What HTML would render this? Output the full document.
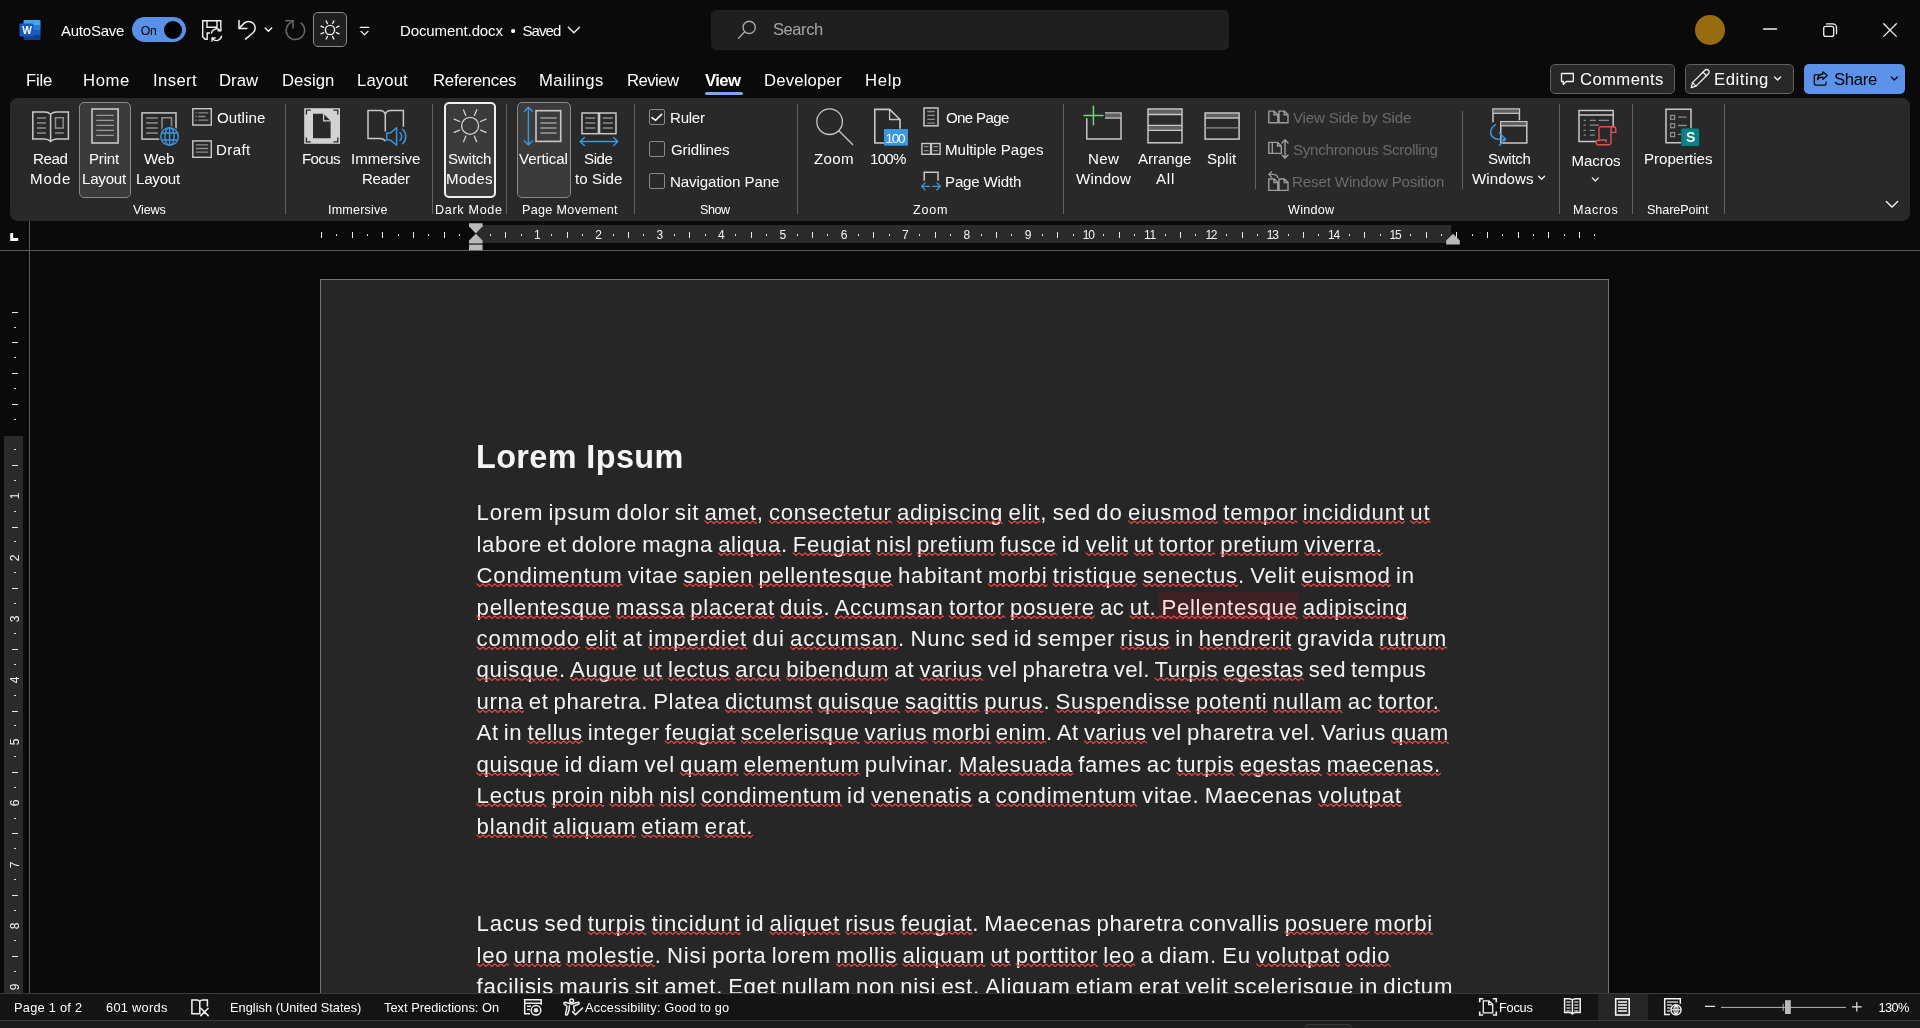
<!DOCTYPE html>
<html lang="en">
<head>
<meta charset="utf-8">
<title>Document.docx - Word</title>
<style>
html,body{margin:0;padding:0;background:#0a0a0a;}
body{width:1920px;height:1028px;overflow:hidden;background:#0a0a0a;position:relative;font-family:"Liberation Sans",sans-serif;color:#fff;}
.b{position:absolute;box-sizing:border-box;}
.t{position:absolute;white-space:pre;line-height:1;color:#fff;z-index:4;}
.d{z-index:1;}
.vn{position:absolute;left:5px;width:20px;height:14px;line-height:14px;font-size:12px;text-align:center;color:#f4f4f4;transform:rotate(-90deg);z-index:1;}
svg.sq{z-index:1;}
.hl{background:#3e2123;}
.pk{color:#f9dede;}
#app{position:absolute;left:0;top:0;width:1920px;height:1028px;overflow:hidden;will-change:transform;}
svg{position:absolute;left:0;top:0;overflow:visible;z-index:3;}
</style>
</head>
<body>
<div id="app">
<!-- title bar -->
<div class="b" style="left:711px;top:10px;width:518px;height:40px;background:#1f1f1f;border-radius:5px;"></div>
<div class="b" style="left:132px;top:17px;width:54px;height:25px;background:#5990e8;border-radius:13px;"></div>
<div class="b" style="left:164px;top:21px;width:18px;height:18px;background:#000;border-radius:9px;"></div>
<div class="b" style="left:313px;top:12px;width:34px;height:35px;background:#1f1f1f;border:1px solid #8a8a8a;border-radius:5px;"></div>
<div class="b" style="left:1695px;top:15px;width:30px;height:30px;background:#976c0f;border-radius:15px;"></div>
<!-- tab row -->
<div class="b" style="left:705px;top:92px;width:38px;height:3px;background:#7aa7f3;border-radius:2px;"></div>
<div class="b" style="left:1550px;top:64px;width:125px;height:30px;background:#282828;border:1px solid #606060;border-radius:5px;"></div>
<div class="b" style="left:1685px;top:64px;width:109px;height:30px;background:#282828;border:1px solid #606060;border-radius:5px;"></div>
<div class="b" style="left:1804px;top:64px;width:101px;height:30px;background:#5b92ea;border-radius:5px;"></div>
<!-- ribbon -->
<div class="b" style="left:10px;top:98px;width:1900px;height:123px;background:#292929;border-radius:8px;"></div>
<div class="b" style="left:79px;top:102px;width:52px;height:96px;background:#3b3b3b;border:1px solid #8a8a8a;border-radius:5px;"></div>
<div class="b" style="left:444px;top:102px;width:52px;height:96px;background:#3b3b3b;border:2px solid #f0f0f0;border-radius:5px;"></div>
<div class="b" style="left:517px;top:102px;width:54px;height:96px;background:#3b3b3b;border:1px solid #8a8a8a;border-radius:5px;"></div>
<!-- ribbon separators -->
<div class="b" style="left:285px;top:104px;width:1px;height:110px;background:#636363;"></div>
<div class="b" style="left:432px;top:104px;width:1px;height:110px;background:#636363;"></div>
<div class="b" style="left:506px;top:104px;width:1px;height:110px;background:#636363;"></div>
<div class="b" style="left:634px;top:104px;width:1px;height:110px;background:#636363;"></div>
<div class="b" style="left:797px;top:104px;width:1px;height:110px;background:#636363;"></div>
<div class="b" style="left:1063px;top:104px;width:1px;height:110px;background:#636363;"></div>
<div class="b" style="left:1255px;top:111px;width:1px;height:78px;background:#636363;"></div>
<div class="b" style="left:1462px;top:111px;width:1px;height:78px;background:#636363;"></div>
<div class="b" style="left:1559px;top:104px;width:1px;height:110px;background:#636363;"></div>
<div class="b" style="left:1632px;top:104px;width:1px;height:110px;background:#636363;"></div>
<div class="b" style="left:1724px;top:104px;width:1px;height:110px;background:#636363;"></div>
<!-- checkboxes -->
<div class="b" style="left:649px;top:109px;width:16px;height:16px;border:1px solid #8a8a8a;border-radius:2px;"></div>
<div class="b" style="left:649px;top:141px;width:16px;height:16px;border:1px solid #8a8a8a;border-radius:2px;"></div>
<div class="b" style="left:649px;top:173px;width:16px;height:16px;border:1px solid #8a8a8a;border-radius:2px;"></div>
<!-- rulers -->
<div class="b" style="left:476px;top:225px;width:975px;height:18px;background:#2b2b2b;"></div>
<div class="b" style="left:0px;top:250px;width:1920px;height:1px;background:#5a5a5a;"></div>
<div class="b" style="left:29px;top:221px;width:1px;height:772px;background:#5a5a5a;"></div>
<div class="b" style="left:4px;top:436px;width:19px;height:557px;background:#2b2b2b;"></div>
<!-- page -->
<div class="b" style="left:320px;top:279px;width:1289px;height:720px;background:#262626;border:1px solid #747474;"></div>
<div class="b hl" style="left:1159px;top:592px;width:139px;height:29px;"></div>

<div class="vn" style="top:489.4px;">1</div>
<div class="vn" style="top:550.7px;">2</div>
<div class="vn" style="top:612.1px;">3</div>
<div class="vn" style="top:673.4px;">4</div>
<div class="vn" style="top:734.8px;">5</div>
<div class="vn" style="top:796.2px;">6</div>
<div class="vn" style="top:857.5px;">7</div>
<div class="vn" style="top:918.9px;">8</div>
<div class="vn" style="top:980.2px;">9</div>
<div class="t" style="left:61.0px;top:23.00px;font-size:15px;letter-spacing:-0.24px;">AutoSave</div>
<div class="t" style="left:140.7px;top:25.00px;font-size:12.2px;letter-spacing:-0.19px;color:#000;">On</div>
<div class="t" style="left:22.3px;top:26.00px;font-size:10.2px;font-weight:700;">W</div>
<div class="t" style="left:400.0px;top:23.00px;font-size:15px;letter-spacing:-0.1px;">Document.docx</div>
<div class="t" style="left:510.6px;top:23.00px;font-size:15px;">•</div>
<div class="t" style="left:522.5px;top:23.00px;font-size:15px;letter-spacing:-0.93px;">Saved</div>
<div class="t" style="left:773.0px;top:21.00px;font-size:16.5px;letter-spacing:-0.42px;color:#a6a6a6;">Search</div>
<div class="t" style="left:26.0px;top:73.00px;font-size:16.7px;letter-spacing:-0.2px;">File</div>
<div class="t" style="left:83.0px;top:73.00px;font-size:16.7px;letter-spacing:0.59px;">Home</div>
<div class="t" style="left:153.0px;top:73.00px;font-size:16.7px;letter-spacing:0.38px;">Insert</div>
<div class="t" style="left:219.0px;top:73.00px;font-size:16.7px;letter-spacing:0.03px;">Draw</div>
<div class="t" style="left:282.0px;top:73.00px;font-size:16.7px;letter-spacing:0.07px;">Design</div>
<div class="t" style="left:357.0px;top:73.00px;font-size:16.7px;letter-spacing:0.11px;">Layout</div>
<div class="t" style="left:433.0px;top:73.00px;font-size:16.7px;letter-spacing:-0.22px;">References</div>
<div class="t" style="left:539.0px;top:73.00px;font-size:16.7px;letter-spacing:0.45px;">Mailings</div>
<div class="t" style="left:627.0px;top:73.00px;font-size:16.7px;letter-spacing:-0.53px;">Review</div>
<div class="t" style="left:764.0px;top:73.00px;font-size:16.7px;letter-spacing:0.18px;">Developer</div>
<div class="t" style="left:865.0px;top:73.00px;font-size:16.7px;letter-spacing:0.65px;">Help</div>
<div class="t" style="left:705.0px;top:73.00px;font-size:16.7px;letter-spacing:-0.58px;font-weight:700;">View</div>
<div class="t" style="left:1580.0px;top:72.00px;font-size:16.7px;letter-spacing:0.38px;">Comments</div>
<div class="t" style="left:1714.0px;top:72.00px;font-size:16.7px;letter-spacing:0.54px;">Editing</div>
<div class="t" style="left:1834.0px;top:72.00px;font-size:16.7px;letter-spacing:-0.31px;color:#000;">Share</div>
<div class="t" style="left:33.0px;top:151.00px;font-size:15.1px;letter-spacing:-0.4px;">Read</div>
<div class="t" style="left:30.0px;top:171.00px;font-size:15.1px;letter-spacing:0.88px;">Mode</div>
<div class="t" style="left:89.0px;top:151.00px;font-size:15.1px;letter-spacing:-0.21px;">Print</div>
<div class="t" style="left:82.0px;top:171.00px;font-size:15.1px;letter-spacing:-0.23px;">Layout</div>
<div class="t" style="left:144.0px;top:151.00px;font-size:15.1px;letter-spacing:-0.19px;">Web</div>
<div class="t" style="left:136.0px;top:171.00px;font-size:15.1px;letter-spacing:-0.23px;">Layout</div>
<div class="t" style="left:302.0px;top:151.00px;font-size:15.1px;letter-spacing:-0.64px;">Focus</div>
<div class="t" style="left:351.0px;top:151.00px;font-size:15.1px;letter-spacing:-0.03px;">Immersive</div>
<div class="t" style="left:362.0px;top:171.00px;font-size:15.1px;letter-spacing:-0.3px;">Reader</div>
<div class="t" style="left:448.0px;top:151.00px;font-size:15.1px;letter-spacing:-0.21px;">Switch</div>
<div class="t" style="left:446.0px;top:171.00px;font-size:15.1px;letter-spacing:0.31px;">Modes</div>
<div class="t" style="left:519.0px;top:151.00px;font-size:15.1px;letter-spacing:-0.09px;">Vertical</div>
<div class="t" style="left:584.0px;top:151.00px;font-size:15.1px;letter-spacing:-0.44px;">Side</div>
<div class="t" style="left:575.0px;top:171.00px;font-size:15.1px;letter-spacing:0.07px;">to Side</div>
<div class="t" style="left:814.0px;top:151.00px;font-size:15.1px;letter-spacing:0.33px;">Zoom</div>
<div class="t" style="left:870.0px;top:151.00px;font-size:15.1px;letter-spacing:-0.73px;">100%</div>
<div class="t" style="left:1088.0px;top:151.00px;font-size:15.1px;letter-spacing:0.35px;">New</div>
<div class="t" style="left:1076.0px;top:171.00px;font-size:15.1px;letter-spacing:0.24px;">Window</div>
<div class="t" style="left:1138.0px;top:151.00px;font-size:15.1px;letter-spacing:-0.05px;">Arrange</div>
<div class="t" style="left:1156.0px;top:171.00px;font-size:15.1px;letter-spacing:0.79px;">All</div>
<div class="t" style="left:1207.0px;top:151.00px;font-size:15.1px;letter-spacing:-0.05px;">Split</div>
<div class="t" style="left:1488.0px;top:151.00px;font-size:15.1px;letter-spacing:-0.31px;">Switch</div>
<div class="t" style="left:1472.0px;top:171.00px;font-size:15.1px;letter-spacing:0.05px;">Windows</div>
<div class="t" style="left:1571.5px;top:153.00px;font-size:15.1px;letter-spacing:-0.09px;">Macros</div>
<div class="t" style="left:1644.0px;top:151.00px;font-size:15.1px;letter-spacing:-0.03px;">Properties</div>
<div class="t" style="left:217.0px;top:110.00px;font-size:15.1px;letter-spacing:0.09px;">Outline</div>
<div class="t" style="left:216.0px;top:142.00px;font-size:15.1px;letter-spacing:0.37px;">Draft</div>
<div class="t" style="left:670.0px;top:110.00px;font-size:15.1px;letter-spacing:-0.26px;">Ruler</div>
<div class="t" style="left:671.0px;top:142.00px;font-size:15.1px;letter-spacing:-0.13px;">Gridlines</div>
<div class="t" style="left:670.0px;top:174.00px;font-size:15.1px;letter-spacing:-0.1px;">Navigation Pane</div>
<div class="t" style="left:946.0px;top:110.00px;font-size:15.1px;letter-spacing:-0.66px;">One Page</div>
<div class="t" style="left:945.0px;top:142.00px;font-size:15.1px;letter-spacing:-0.04px;">Multiple Pages</div>
<div class="t" style="left:945.0px;top:174.00px;font-size:15.1px;letter-spacing:-0.18px;">Page Width</div>
<div class="t" style="left:1293.0px;top:110.00px;font-size:15.1px;letter-spacing:-0.19px;color:#6b6b6b;">View Side by Side</div>
<div class="t" style="left:1293.0px;top:142.00px;font-size:15.1px;letter-spacing:-0.26px;color:#6b6b6b;">Synchronous Scrolling</div>
<div class="t" style="left:1292.0px;top:174.00px;font-size:15.1px;letter-spacing:-0.14px;color:#6b6b6b;">Reset Window Position</div>
<div class="t" style="left:133.0px;top:204.00px;font-size:12.6px;letter-spacing:-0.14px;">Views</div>
<div class="t" style="left:328.0px;top:204.00px;font-size:12.6px;letter-spacing:0.18px;">Immersive</div>
<div class="t" style="left:435.0px;top:204.00px;font-size:12.6px;letter-spacing:0.68px;">Dark Mode</div>
<div class="t" style="left:522.0px;top:204.00px;font-size:12.6px;letter-spacing:0.32px;">Page Movement</div>
<div class="t" style="left:700.0px;top:204.00px;font-size:12.6px;letter-spacing:-0.47px;">Show</div>
<div class="t" style="left:913.0px;top:204.00px;font-size:12.6px;letter-spacing:0.76px;">Zoom</div>
<div class="t" style="left:1288.0px;top:204.00px;font-size:12.6px;letter-spacing:0.26px;">Window</div>
<div class="t" style="left:1573.0px;top:204.00px;font-size:12.6px;letter-spacing:0.7px;">Macros</div>
<div class="t" style="left:1647.0px;top:204.00px;font-size:12.6px;letter-spacing:-0.09px;">SharePoint</div>
<div class="t" style="left:885.5px;top:132.00px;font-size:13.6px;letter-spacing:-1.31px;">100</div>
<div class="t" style="left:1686.0px;top:130.00px;font-size:14px;font-weight:700;">S</div>
<div class="t" style="left:14.0px;top:1002.00px;font-size:12.8px;letter-spacing:0.26px;">Page 1 of 2</div>
<div class="t" style="left:106.0px;top:1002.00px;font-size:12.8px;letter-spacing:0.29px;">601 words</div>
<div class="t" style="left:230.0px;top:1002.00px;font-size:12.8px;letter-spacing:0.02px;">English (United States)</div>
<div class="t" style="left:384.0px;top:1002.00px;font-size:12.8px;letter-spacing:0.03px;">Text Predictions: On</div>
<div class="t" style="left:585.0px;top:1002.00px;font-size:12.8px;letter-spacing:0.17px;">Accessibility: Good to go</div>
<div class="t" style="left:1499.0px;top:1002.00px;font-size:12.8px;letter-spacing:-0.24px;">Focus</div>
<div class="t" style="left:1878.5px;top:1002.00px;font-size:12.8px;letter-spacing:-0.62px;">130%</div>
<div class="t" style="left:533.9px;top:229.00px;font-size:12px;color:#f4f4f4;">1</div>
<div class="t" style="left:595.3px;top:229.00px;font-size:12px;color:#f4f4f4;">2</div>
<div class="t" style="left:656.6px;top:229.00px;font-size:12px;color:#f4f4f4;">3</div>
<div class="t" style="left:718.0px;top:229.00px;font-size:12px;color:#f4f4f4;">4</div>
<div class="t" style="left:779.4px;top:229.00px;font-size:12px;color:#f4f4f4;">5</div>
<div class="t" style="left:840.7px;top:229.00px;font-size:12px;color:#f4f4f4;">6</div>
<div class="t" style="left:902.1px;top:229.00px;font-size:12px;color:#f4f4f4;">7</div>
<div class="t" style="left:963.4px;top:229.00px;font-size:12px;color:#f4f4f4;">8</div>
<div class="t" style="left:1024.8px;top:229.00px;font-size:12px;color:#f4f4f4;">9</div>
<div class="t" style="left:1082.7px;top:229.00px;font-size:12px;letter-spacing:-1.19px;color:#f4f4f4;">10</div>
<div class="t" style="left:1144.0px;top:229.00px;font-size:12px;letter-spacing:-0.3px;color:#f4f4f4;">11</div>
<div class="t" style="left:1205.4px;top:229.00px;font-size:12px;letter-spacing:-1.19px;color:#f4f4f4;">12</div>
<div class="t" style="left:1266.7px;top:229.00px;font-size:12px;letter-spacing:-1.19px;color:#f4f4f4;">13</div>
<div class="t" style="left:1328.1px;top:229.00px;font-size:12px;letter-spacing:-1.19px;color:#f4f4f4;">14</div>
<div class="t" style="left:1389.5px;top:229.00px;font-size:12px;letter-spacing:-1.19px;color:#f4f4f4;">15</div>
<div class="t" style="left:476.0px;top:441.00px;font-size:32.4px;letter-spacing:0.39px;color:#f5f5f5;font-weight:700;">Lorem Ipsum</div>
<div class="t d" style="left:476.6px;top:502.00px;font-size:22.2px;letter-spacing:0.73px;color:#f3f3f3;word-spacing:-1.6px;">Lorem ipsum dolor sit <span class="u">amet</span>, <span class="u">consectetur</span> <span class="u">adipiscing</span> </div>
<div class="t d" style="left:1008.5px;top:502.00px;font-size:22.2px;letter-spacing:0.84px;color:#f3f3f3;word-spacing:-1.6px;"><span class="u">elit</span>, sed do <span class="u">eiusmod</span> <span class="u">tempor</span> <span class="u">incididunt</span> <span class="u">ut</span></div>
<div class="t d" style="left:476.6px;top:534.00px;font-size:22.2px;letter-spacing:0.59px;color:#f3f3f3;word-spacing:-1.6px;">labore et dolore magna <span class="u">aliqua</span>. <span class="u">Feugiat</span> <span class="u">nisl</span> <span class="u">pretium</span> </div>
<div class="t d" style="left:1000.0px;top:534.00px;font-size:22.2px;letter-spacing:0.69px;color:#f3f3f3;word-spacing:-1.6px;"><span class="u">fusce</span> id <span class="u">velit</span> <span class="u">ut</span> <span class="u">tortor</span> <span class="u">pretium</span> <span class="u">viverra.</span></div>
<div class="t d" style="left:476.6px;top:565.00px;font-size:22.2px;letter-spacing:0.71px;color:#f3f3f3;word-spacing:-1.6px;"><span class="u">Condimentum</span> vitae <span class="u">sapien</span> <span class="u">pellentesque</span> habitant </div>
<div class="t d" style="left:988.0px;top:565.00px;font-size:22.2px;letter-spacing:0.78px;color:#f3f3f3;word-spacing:-1.6px;"><span class="u">morbi</span> <span class="u">tristique</span> <span class="u">senectus</span>. Velit <span class="u">euismod</span> in</div>
<div class="t d" style="left:476.6px;top:597.00px;font-size:22.2px;letter-spacing:0.7px;color:#f3f3f3;word-spacing:-1.6px;"><span class="u">pellentesque</span> <span class="u">massa</span> <span class="u">placerat</span> <span class="u">duis</span>. <span class="u">Accumsan</span> <span class="u">tortor</span> </div>
<div class="t d" style="left:1010.0px;top:597.00px;font-size:22.2px;letter-spacing:0.64px;color:#f3f3f3;word-spacing:-1.6px;"><span class="u">posuere</span> ac <span class="u">ut. </span><span class="u pk">Pellentesque</span> <span class="u">adipiscing</span></div>
<div class="t d" style="left:476.6px;top:628.00px;font-size:22.2px;letter-spacing:0.85px;color:#f3f3f3;word-spacing:-1.6px;"><span class="u">commodo</span> <span class="u">elit</span> at <span class="u">imperdiet</span> dui <span class="u">accumsan</span>. Nunc </div>
<div class="t d" style="left:971.0px;top:628.00px;font-size:22.2px;letter-spacing:0.6px;color:#f3f3f3;word-spacing:-1.6px;">sed id semper <span class="u">risus</span> in <span class="u">hendrerit</span> gravida <span class="u">rutrum</span></div>
<div class="t d" style="left:476.6px;top:659.00px;font-size:22.2px;letter-spacing:0.68px;color:#f3f3f3;word-spacing:-1.6px;"><span class="u">quisque</span>. <span class="u">Augue</span> <span class="u">ut</span> <span class="u">lectus</span> <span class="u">arcu</span> <span class="u">bibendum</span> at <span class="u">varius</span> </div>
<div class="t d" style="left:987.8px;top:659.00px;font-size:22.2px;letter-spacing:0.44px;color:#f3f3f3;word-spacing:-1.6px;">vel pharetra vel. <span class="u">Turpis</span> <span class="u">egestas</span> sed tempus</div>
<div class="t d" style="left:476.6px;top:691.00px;font-size:22.2px;letter-spacing:0.62px;color:#f3f3f3;word-spacing:-1.6px;"><span class="u">urna</span> et pharetra. Platea <span class="u">dictumst</span> <span class="u">quisque</span> <span class="u">sagittis</span> </div>
<div class="t d" style="left:984.3px;top:691.00px;font-size:22.2px;letter-spacing:0.72px;color:#f3f3f3;word-spacing:-1.6px;"><span class="u">purus</span>. <span class="u">Suspendisse</span> <span class="u">potenti</span> <span class="u">nullam</span> ac <span class="u">tortor.</span></div>
<div class="t d" style="left:476.6px;top:722.00px;font-size:22.2px;letter-spacing:0.58px;color:#f3f3f3;word-spacing:-1.6px;">At in <span class="u">tellus</span> integer <span class="u">feugiat</span> <span class="u">scelerisque</span> <span class="u">varius</span> <span class="u">morbi</span> </div>
<div class="t d" style="left:995.7px;top:722.00px;font-size:22.2px;letter-spacing:0.57px;color:#f3f3f3;word-spacing:-1.6px;"><span class="u">enim</span>. At <span class="u">varius</span> vel pharetra vel. Varius <span class="u">quam</span></div>
<div class="t d" style="left:476.6px;top:754.00px;font-size:22.2px;letter-spacing:0.69px;color:#f3f3f3;word-spacing:-1.6px;"><span class="u">quisque</span> id diam vel <span class="u">quam</span> <span class="u">elementum</span> pulvinar. </div>
<div class="t d" style="left:959.1px;top:754.00px;font-size:22.2px;letter-spacing:0.6px;color:#f3f3f3;word-spacing:-1.6px;"><span class="u">Malesuada</span> fames ac <span class="u">turpis</span> <span class="u">egestas</span> <span class="u">maecenas.</span></div>
<div class="t d" style="left:476.6px;top:785.00px;font-size:22.2px;letter-spacing:0.7px;color:#f3f3f3;word-spacing:-1.6px;"><span class="u">Lectus</span> <span class="u">proin</span> <span class="u">nibh</span> <span class="u">nisl</span> <span class="u">condimentum</span> id <span class="u">venenatis</span> a </div>
<div class="t d" style="left:995.7px;top:785.00px;font-size:22.2px;letter-spacing:0.72px;color:#f3f3f3;word-spacing:-1.6px;"><span class="u">condimentum</span> vitae. Maecenas <span class="u">volutpat</span></div>
<div class="t d" style="left:476.6px;top:816.00px;font-size:22.2px;letter-spacing:0.78px;color:#f3f3f3;word-spacing:-1.6px;"><span class="u">blandit</span> <span class="u">aliquam</span> <span class="u">etiam</span> <span class="u">erat.</span></div>
<div class="t d" style="left:476.6px;top:913.00px;font-size:22.2px;letter-spacing:0.7px;color:#f3f3f3;word-spacing:-1.6px;">Lacus sed <span class="u">turpis</span> <span class="u">tincidunt</span> id <span class="u">aliquet</span> <span class="u">risus</span> <span class="u">feugiat</span>. </div>
<div class="t d" style="left:984.2px;top:913.00px;font-size:22.2px;letter-spacing:0.6px;color:#f3f3f3;word-spacing:-1.6px;">Maecenas pharetra convallis <span class="u">posuere</span> <span class="u">morbi</span></div>
<div class="t d" style="left:476.6px;top:945.00px;font-size:22.2px;letter-spacing:0.73px;color:#f3f3f3;word-spacing:-1.6px;"><span class="u">leo</span> <span class="u">urna</span> <span class="u">molestie</span>. Nisi porta lorem <span class="u">mollis</span> <span class="u">aliquam</span> </div>
<div class="t d" style="left:990.5px;top:945.00px;font-size:22.2px;letter-spacing:0.76px;color:#f3f3f3;word-spacing:-1.6px;"><span class="u">ut</span> <span class="u">porttitor</span> <span class="u">leo</span> a diam. Eu <span class="u">volutpat</span> <span class="u">odio</span></div>
<div class="t d" style="left:476.6px;top:976.00px;font-size:22.2px;letter-spacing:0.65px;color:#f3f3f3;word-spacing:-1.6px;">facilisis mauris sit amet. Eget nullam non nisi est. </div>
<div class="t d" style="left:985.2px;top:976.00px;font-size:22.2px;letter-spacing:0.73px;color:#f3f3f3;word-spacing:-1.6px;">Aliquam etiam erat velit scelerisque in dictum</div>
<svg class="sq" width="1920" height="1028" viewBox="0 0 1920 1028" fill="none" stroke="#ee4747" stroke-width="1.2" stroke-linejoin="round" stroke-linecap="round">
<path d="M704.8 520.9l3.0 2.6l3.0 -2.6l3.0 2.6l3.0 -2.6l3.0 2.6l3.0 -2.6l3.0 2.6l3.0 -2.6l3.0 2.6l3.0 -2.6l3.0 2.6l3.0 -2.6l3.0 2.6l3.0 -2.6l3.0 2.6l3.0 -2.6l3.0 2.6l0.7 -0.6 M769.3 520.9l3.0 2.6l3.0 -2.6l3.0 2.6l3.0 -2.6l3.0 2.6l3.0 -2.6l3.0 2.6l3.0 -2.6l3.0 2.6l3.0 -2.6l3.0 2.6l3.0 -2.6l3.0 2.6l3.0 -2.6l3.0 2.6l3.0 -2.6l3.0 2.6l3.0 -2.6l3.0 2.6l3.0 -2.6l3.0 2.6l3.0 -2.6l3.0 2.6l3.0 -2.6l3.0 2.6l3.0 -2.6l3.0 2.6l3.0 -2.6l3.0 2.6l3.0 -2.6l3.0 2.6l3.0 -2.6l3.0 2.6l3.0 -2.6l3.0 2.6l3.0 -2.6l3.0 2.6l3.0 -2.6l3.0 2.6l3.0 -2.6l2.2 1.9 M897.3 520.9l3.0 2.6l3.0 -2.6l3.0 2.6l3.0 -2.6l3.0 2.6l3.0 -2.6l3.0 2.6l3.0 -2.6l3.0 2.6l3.0 -2.6l3.0 2.6l3.0 -2.6l3.0 2.6l3.0 -2.6l3.0 2.6l3.0 -2.6l3.0 2.6l3.0 -2.6l3.0 2.6l3.0 -2.6l3.0 2.6l3.0 -2.6l3.0 2.6l3.0 -2.6l3.0 2.6l3.0 -2.6l3.0 2.6l3.0 -2.6l3.0 2.6l3.0 -2.6l3.0 2.6l3.0 -2.6l3.0 2.6l3.0 -2.6l3.0 2.6 M1008.8 520.9l3.0 2.6l3.0 -2.6l3.0 2.6l3.0 -2.6l3.0 2.6l3.0 -2.6l3.0 2.6l3.0 -2.6l3.0 2.6l3.0 -2.6l1.1 0.9 M1128.4 520.9l3.0 2.6l3.0 -2.6l3.0 2.6l3.0 -2.6l3.0 2.6l3.0 -2.6l3.0 2.6l3.0 -2.6l3.0 2.6l3.0 -2.6l3.0 2.6l3.0 -2.6l3.0 2.6l3.0 -2.6l3.0 2.6l3.0 -2.6l3.0 2.6l3.0 -2.6l3.0 2.6l3.0 -2.6l3.0 2.6l3.0 -2.6l3.0 2.6l3.0 -2.6l3.0 2.6l3.0 -2.6l3.0 2.6l3.0 -2.6l3.0 2.6l2.1 -1.8 M1223.6 520.9l3.0 2.6l3.0 -2.6l3.0 2.6l3.0 -2.6l3.0 2.6l3.0 -2.6l3.0 2.6l3.0 -2.6l3.0 2.6l3.0 -2.6l3.0 2.6l3.0 -2.6l3.0 2.6l3.0 -2.6l3.0 2.6l3.0 -2.6l3.0 2.6l3.0 -2.6l3.0 2.6l3.0 -2.6l3.0 2.6l3.0 -2.6l3.0 2.6l3.0 -2.6l1.5 1.3 M1303.1 520.9l3.0 2.6l3.0 -2.6l3.0 2.6l3.0 -2.6l3.0 2.6l3.0 -2.6l3.0 2.6l3.0 -2.6l3.0 2.6l3.0 -2.6l3.0 2.6l3.0 -2.6l3.0 2.6l3.0 -2.6l3.0 2.6l3.0 -2.6l3.0 2.6l3.0 -2.6l3.0 2.6l3.0 -2.6l3.0 2.6l3.0 -2.6l3.0 2.6l3.0 -2.6l3.0 2.6l3.0 -2.6l3.0 2.6l3.0 -2.6l3.0 2.6l3.0 -2.6l3.0 2.6l3.0 -2.6l3.0 2.6l2.5 -2.2 M1410.6 520.9l3.0 2.6l3.0 -2.6l3.0 2.6l3.0 -2.6l3.0 2.6l3.0 -2.6l1.5 1.3 M718.4 552.9l3.0 2.6l3.0 -2.6l3.0 2.6l3.0 -2.6l3.0 2.6l3.0 -2.6l3.0 2.6l3.0 -2.6l3.0 2.6l3.0 -2.6l3.0 2.6l3.0 -2.6l3.0 2.6l3.0 -2.6l3.0 2.6l3.0 -2.6l3.0 2.6l3.0 -2.6l3.0 2.6l3.0 -2.6l2.4 2.1 M793.1 552.9l3.0 2.6l3.0 -2.6l3.0 2.6l3.0 -2.6l3.0 2.6l3.0 -2.6l3.0 2.6l3.0 -2.6l3.0 2.6l3.0 -2.6l3.0 2.6l3.0 -2.6l3.0 2.6l3.0 -2.6l3.0 2.6l3.0 -2.6l3.0 2.6l3.0 -2.6l3.0 2.6l3.0 -2.6l3.0 2.6l3.0 -2.6l3.0 2.6l3.0 -2.6l3.0 2.6l2.8 -2.4 M876.4 552.9l3.0 2.6l3.0 -2.6l3.0 2.6l3.0 -2.6l3.0 2.6l3.0 -2.6l3.0 2.6l3.0 -2.6l3.0 2.6l3.0 -2.6l3.0 2.6l2.3 -2.0 M917.2 552.9l3.0 2.6l3.0 -2.6l3.0 2.6l3.0 -2.6l3.0 2.6l3.0 -2.6l3.0 2.6l3.0 -2.6l3.0 2.6l3.0 -2.6l3.0 2.6l3.0 -2.6l3.0 2.6l3.0 -2.6l3.0 2.6l3.0 -2.6l3.0 2.6l3.0 -2.6l3.0 2.6l3.0 -2.6l3.0 2.6l3.0 -2.6l3.0 2.6l3.0 -2.6l3.0 2.6l2.7 -2.4 M1000.3 552.9l3.0 2.6l3.0 -2.6l3.0 2.6l3.0 -2.6l3.0 2.6l3.0 -2.6l3.0 2.6l3.0 -2.6l3.0 2.6l3.0 -2.6l3.0 2.6l3.0 -2.6l3.0 2.6l3.0 -2.6l3.0 2.6l3.0 -2.6l3.0 2.6l3.0 -2.6l2.0 1.7 M1086.0 552.9l3.0 2.6l3.0 -2.6l3.0 2.6l3.0 -2.6l3.0 2.6l3.0 -2.6l3.0 2.6l3.0 -2.6l3.0 2.6l3.0 -2.6l3.0 2.6l3.0 -2.6l3.0 2.6l3.0 -2.6 M1134.1 552.9l3.0 2.6l3.0 -2.6l3.0 2.6l3.0 -2.6l3.0 2.6l3.0 -2.6l1.4 1.2 M1159.3 552.9l3.0 2.6l3.0 -2.6l3.0 2.6l3.0 -2.6l3.0 2.6l3.0 -2.6l3.0 2.6l3.0 -2.6l3.0 2.6l3.0 -2.6l3.0 2.6l3.0 -2.6l3.0 2.6l3.0 -2.6l3.0 2.6l3.0 -2.6l3.0 2.6l3.0 -2.6l1.4 1.3 M1220.5 552.9l3.0 2.6l3.0 -2.6l3.0 2.6l3.0 -2.6l3.0 2.6l3.0 -2.6l3.0 2.6l3.0 -2.6l3.0 2.6l3.0 -2.6l3.0 2.6l3.0 -2.6l3.0 2.6l3.0 -2.6l3.0 2.6l3.0 -2.6l3.0 2.6l3.0 -2.6l3.0 2.6l3.0 -2.6l3.0 2.6l3.0 -2.6l3.0 2.6l3.0 -2.6l3.0 2.6l3.0 -2.6 M1304.6 552.9l3.0 2.6l3.0 -2.6l3.0 2.6l3.0 -2.6l3.0 2.6l3.0 -2.6l3.0 2.6l3.0 -2.6l3.0 2.6l3.0 -2.6l3.0 2.6l3.0 -2.6l3.0 2.6l3.0 -2.6l3.0 2.6l3.0 -2.6l3.0 2.6l3.0 -2.6l3.0 2.6l3.0 -2.6l3.0 2.6l3.0 -2.6l3.0 2.6l3.0 -2.6l3.0 2.6l2.8 -2.4 M476.9 583.9l3.0 2.6l3.0 -2.6l3.0 2.6l3.0 -2.6l3.0 2.6l3.0 -2.6l3.0 2.6l3.0 -2.6l3.0 2.6l3.0 -2.6l3.0 2.6l3.0 -2.6l3.0 2.6l3.0 -2.6l3.0 2.6l3.0 -2.6l3.0 2.6l3.0 -2.6l3.0 2.6l3.0 -2.6l3.0 2.6l3.0 -2.6l3.0 2.6l3.0 -2.6l3.0 2.6l3.0 -2.6l3.0 2.6l3.0 -2.6l3.0 2.6l3.0 -2.6l3.0 2.6l3.0 -2.6l3.0 2.6l3.0 -2.6l3.0 2.6l3.0 -2.6l3.0 2.6l3.0 -2.6l3.0 2.6l3.0 -2.6l3.0 2.6l3.0 -2.6l3.0 2.6l3.0 -2.6l3.0 2.6l3.0 -2.6l3.0 2.6l3.0 -2.6l1.4 1.2 M683.8 583.9l3.0 2.6l3.0 -2.6l3.0 2.6l3.0 -2.6l3.0 2.6l3.0 -2.6l3.0 2.6l3.0 -2.6l3.0 2.6l3.0 -2.6l3.0 2.6l3.0 -2.6l3.0 2.6l3.0 -2.6l3.0 2.6l3.0 -2.6l3.0 2.6l3.0 -2.6l3.0 2.6l3.0 -2.6l3.0 2.6l3.0 -2.6l3.0 2.6 M758.7 583.9l3.0 2.6l3.0 -2.6l3.0 2.6l3.0 -2.6l3.0 2.6l3.0 -2.6l3.0 2.6l3.0 -2.6l3.0 2.6l3.0 -2.6l3.0 2.6l3.0 -2.6l3.0 2.6l3.0 -2.6l3.0 2.6l3.0 -2.6l3.0 2.6l3.0 -2.6l3.0 2.6l3.0 -2.6l3.0 2.6l3.0 -2.6l3.0 2.6l3.0 -2.6l3.0 2.6l3.0 -2.6l3.0 2.6l3.0 -2.6l3.0 2.6l3.0 -2.6l3.0 2.6l3.0 -2.6l3.0 2.6l3.0 -2.6l3.0 2.6l3.0 -2.6l3.0 2.6l3.0 -2.6l3.0 2.6l3.0 -2.6l3.0 2.6l3.0 -2.6l3.0 2.6l3.0 -2.6l1.8 1.6 M988.3 583.9l3.0 2.6l3.0 -2.6l3.0 2.6l3.0 -2.6l3.0 2.6l3.0 -2.6l3.0 2.6l3.0 -2.6l3.0 2.6l3.0 -2.6l3.0 2.6l3.0 -2.6l3.0 2.6l3.0 -2.6l3.0 2.6l3.0 -2.6l3.0 2.6l3.0 -2.6l3.0 2.6l1.8 -1.6 M1053.0 583.9l3.0 2.6l3.0 -2.6l3.0 2.6l3.0 -2.6l3.0 2.6l3.0 -2.6l3.0 2.6l3.0 -2.6l3.0 2.6l3.0 -2.6l3.0 2.6l3.0 -2.6l3.0 2.6l3.0 -2.6l3.0 2.6l3.0 -2.6l3.0 2.6l3.0 -2.6l3.0 2.6l3.0 -2.6l3.0 2.6l3.0 -2.6l3.0 2.6l3.0 -2.6l3.0 2.6l3.0 -2.6l3.0 2.6l3.0 -2.6 M1143.1 583.9l3.0 2.6l3.0 -2.6l3.0 2.6l3.0 -2.6l3.0 2.6l3.0 -2.6l3.0 2.6l3.0 -2.6l3.0 2.6l3.0 -2.6l3.0 2.6l3.0 -2.6l3.0 2.6l3.0 -2.6l3.0 2.6l3.0 -2.6l3.0 2.6l3.0 -2.6l3.0 2.6l3.0 -2.6l3.0 2.6l3.0 -2.6l3.0 2.6l3.0 -2.6l3.0 2.6l3.0 -2.6l3.0 2.6l3.0 -2.6l3.0 2.6l3.0 -2.6l3.0 2.6l1.5 -1.3 M1301.7 583.9l3.0 2.6l3.0 -2.6l3.0 2.6l3.0 -2.6l3.0 2.6l3.0 -2.6l3.0 2.6l3.0 -2.6l3.0 2.6l3.0 -2.6l3.0 2.6l3.0 -2.6l3.0 2.6l3.0 -2.6l3.0 2.6l3.0 -2.6l3.0 2.6l3.0 -2.6l3.0 2.6l3.0 -2.6l3.0 2.6l3.0 -2.6l3.0 2.6l3.0 -2.6l3.0 2.6l3.0 -2.6l3.0 2.6l3.0 -2.6l3.0 2.6l1.7 -1.5 M476.9 615.9l3.0 2.6l3.0 -2.6l3.0 2.6l3.0 -2.6l3.0 2.6l3.0 -2.6l3.0 2.6l3.0 -2.6l3.0 2.6l3.0 -2.6l3.0 2.6l3.0 -2.6l3.0 2.6l3.0 -2.6l3.0 2.6l3.0 -2.6l3.0 2.6l3.0 -2.6l3.0 2.6l3.0 -2.6l3.0 2.6l3.0 -2.6l3.0 2.6l3.0 -2.6l3.0 2.6l3.0 -2.6l3.0 2.6l3.0 -2.6l3.0 2.6l3.0 -2.6l3.0 2.6l3.0 -2.6l3.0 2.6l3.0 -2.6l3.0 2.6l3.0 -2.6l3.0 2.6l3.0 -2.6l3.0 2.6l3.0 -2.6l3.0 2.6l3.0 -2.6l3.0 2.6l3.0 -2.6l1.7 1.5 M616.4 615.9l3.0 2.6l3.0 -2.6l3.0 2.6l3.0 -2.6l3.0 2.6l3.0 -2.6l3.0 2.6l3.0 -2.6l3.0 2.6l3.0 -2.6l3.0 2.6l3.0 -2.6l3.0 2.6l3.0 -2.6l3.0 2.6l3.0 -2.6l3.0 2.6l3.0 -2.6l3.0 2.6l3.0 -2.6l3.0 2.6l3.0 -2.6l2.4 2.0 M690.5 615.9l3.0 2.6l3.0 -2.6l3.0 2.6l3.0 -2.6l3.0 2.6l3.0 -2.6l3.0 2.6l3.0 -2.6l3.0 2.6l3.0 -2.6l3.0 2.6l3.0 -2.6l3.0 2.6l3.0 -2.6l3.0 2.6l3.0 -2.6l3.0 2.6l3.0 -2.6l3.0 2.6l3.0 -2.6l3.0 2.6l3.0 -2.6l3.0 2.6l3.0 -2.6l3.0 2.6l3.0 -2.6l3.0 2.6l3.0 -2.6 M780.3 615.9l3.0 2.6l3.0 -2.6l3.0 2.6l3.0 -2.6l3.0 2.6l3.0 -2.6l3.0 2.6l3.0 -2.6l3.0 2.6l3.0 -2.6l3.0 2.6l3.0 -2.6l3.0 2.6l3.0 -2.6l1.0 0.9 M834.8 615.9l3.0 2.6l3.0 -2.6l3.0 2.6l3.0 -2.6l3.0 2.6l3.0 -2.6l3.0 2.6l3.0 -2.6l3.0 2.6l3.0 -2.6l3.0 2.6l3.0 -2.6l3.0 2.6l3.0 -2.6l3.0 2.6l3.0 -2.6l3.0 2.6l3.0 -2.6l3.0 2.6l3.0 -2.6l3.0 2.6l3.0 -2.6l3.0 2.6l3.0 -2.6l3.0 2.6l3.0 -2.6l3.0 2.6l3.0 -2.6l3.0 2.6l3.0 -2.6l3.0 2.6l3.0 -2.6l3.0 2.6l3.0 -2.6l3.0 2.6l3.0 -2.6l0.7 0.6 M949.2 615.9l3.0 2.6l3.0 -2.6l3.0 2.6l3.0 -2.6l3.0 2.6l3.0 -2.6l3.0 2.6l3.0 -2.6l3.0 2.6l3.0 -2.6l3.0 2.6l3.0 -2.6l3.0 2.6l3.0 -2.6l3.0 2.6l3.0 -2.6l3.0 2.6l3.0 -2.6l1.5 1.3 M1010.3 615.9l3.0 2.6l3.0 -2.6l3.0 2.6l3.0 -2.6l3.0 2.6l3.0 -2.6l3.0 2.6l3.0 -2.6l3.0 2.6l3.0 -2.6l3.0 2.6l3.0 -2.6l3.0 2.6l3.0 -2.6l3.0 2.6l3.0 -2.6l3.0 2.6l3.0 -2.6l3.0 2.6l3.0 -2.6l3.0 2.6l3.0 -2.6l3.0 2.6l3.0 -2.6l3.0 2.6l3.0 -2.6l3.0 2.6l3.0 -2.6 M1130.1 615.9l3.0 2.6l3.0 -2.6l3.0 2.6l3.0 -2.6l3.0 2.6l3.0 -2.6l3.0 2.6l3.0 -2.6l3.0 2.6l3.0 -2.6l1.4 1.2 M1161.9 615.9l3.0 2.6l3.0 -2.6l3.0 2.6l3.0 -2.6l3.0 2.6l3.0 -2.6l3.0 2.6l3.0 -2.6l3.0 2.6l3.0 -2.6l3.0 2.6l3.0 -2.6l3.0 2.6l3.0 -2.6l3.0 2.6l3.0 -2.6l3.0 2.6l3.0 -2.6l3.0 2.6l3.0 -2.6l3.0 2.6l3.0 -2.6l3.0 2.6l3.0 -2.6l3.0 2.6l3.0 -2.6l3.0 2.6l3.0 -2.6l3.0 2.6l3.0 -2.6l3.0 2.6l3.0 -2.6l3.0 2.6l3.0 -2.6l3.0 2.6l3.0 -2.6l3.0 2.6l3.0 -2.6l3.0 2.6l3.0 -2.6l3.0 2.6l3.0 -2.6l3.0 2.6l3.0 -2.6l3.0 2.6l0.5 -0.5 M1303.1 615.9l3.0 2.6l3.0 -2.6l3.0 2.6l3.0 -2.6l3.0 2.6l3.0 -2.6l3.0 2.6l3.0 -2.6l3.0 2.6l3.0 -2.6l3.0 2.6l3.0 -2.6l3.0 2.6l3.0 -2.6l3.0 2.6l3.0 -2.6l3.0 2.6l3.0 -2.6l3.0 2.6l3.0 -2.6l3.0 2.6l3.0 -2.6l3.0 2.6l3.0 -2.6l3.0 2.6l3.0 -2.6l3.0 2.6l3.0 -2.6l3.0 2.6l3.0 -2.6l3.0 2.6l3.0 -2.6l3.0 2.6l3.0 -2.6l2.6 2.3 M476.9 646.9l3.0 2.6l3.0 -2.6l3.0 2.6l3.0 -2.6l3.0 2.6l3.0 -2.6l3.0 2.6l3.0 -2.6l3.0 2.6l3.0 -2.6l3.0 2.6l3.0 -2.6l3.0 2.6l3.0 -2.6l3.0 2.6l3.0 -2.6l3.0 2.6l3.0 -2.6l3.0 2.6l3.0 -2.6l3.0 2.6l3.0 -2.6l3.0 2.6l3.0 -2.6l3.0 2.6l3.0 -2.6l3.0 2.6l3.0 -2.6l3.0 2.6l3.0 -2.6l3.0 2.6l3.0 -2.6l3.0 2.6l3.0 -2.6l0.7 0.6 M585.7 646.9l3.0 2.6l3.0 -2.6l3.0 2.6l3.0 -2.6l3.0 2.6l3.0 -2.6l3.0 2.6l3.0 -2.6l3.0 2.6l3.0 -2.6l1.1 1.0 M648.5 646.9l3.0 2.6l3.0 -2.6l3.0 2.6l3.0 -2.6l3.0 2.6l3.0 -2.6l3.0 2.6l3.0 -2.6l3.0 2.6l3.0 -2.6l3.0 2.6l3.0 -2.6l3.0 2.6l3.0 -2.6l3.0 2.6l3.0 -2.6l3.0 2.6l3.0 -2.6l3.0 2.6l3.0 -2.6l3.0 2.6l3.0 -2.6l3.0 2.6l3.0 -2.6l3.0 2.6l3.0 -2.6l3.0 2.6l3.0 -2.6l3.0 2.6l3.0 -2.6l3.0 2.6l3.0 -2.6l2.3 2.0 M790.4 646.9l3.0 2.6l3.0 -2.6l3.0 2.6l3.0 -2.6l3.0 2.6l3.0 -2.6l3.0 2.6l3.0 -2.6l3.0 2.6l3.0 -2.6l3.0 2.6l3.0 -2.6l3.0 2.6l3.0 -2.6l3.0 2.6l3.0 -2.6l3.0 2.6l3.0 -2.6l3.0 2.6l3.0 -2.6l3.0 2.6l3.0 -2.6l3.0 2.6l3.0 -2.6l3.0 2.6l3.0 -2.6l3.0 2.6l3.0 -2.6l3.0 2.6l3.0 -2.6l3.0 2.6l3.0 -2.6l3.0 2.6l3.0 -2.6l3.0 2.6l2.3 -2.0 M1120.4 646.9l3.0 2.6l3.0 -2.6l3.0 2.6l3.0 -2.6l3.0 2.6l3.0 -2.6l3.0 2.6l3.0 -2.6l3.0 2.6l3.0 -2.6l3.0 2.6l3.0 -2.6l3.0 2.6l3.0 -2.6l3.0 2.6l3.0 -2.6l1.5 1.3 M1199.1 646.9l3.0 2.6l3.0 -2.6l3.0 2.6l3.0 -2.6l3.0 2.6l3.0 -2.6l3.0 2.6l3.0 -2.6l3.0 2.6l3.0 -2.6l3.0 2.6l3.0 -2.6l3.0 2.6l3.0 -2.6l3.0 2.6l3.0 -2.6l3.0 2.6l3.0 -2.6l3.0 2.6l3.0 -2.6l3.0 2.6l3.0 -2.6l3.0 2.6l3.0 -2.6l3.0 2.6l3.0 -2.6l3.0 2.6l3.0 -2.6l3.0 2.6l3.0 -2.6l2.6 2.2 M1379.4 646.9l3.0 2.6l3.0 -2.6l3.0 2.6l3.0 -2.6l3.0 2.6l3.0 -2.6l3.0 2.6l3.0 -2.6l3.0 2.6l3.0 -2.6l3.0 2.6l3.0 -2.6l3.0 2.6l3.0 -2.6l3.0 2.6l3.0 -2.6l3.0 2.6l3.0 -2.6l3.0 2.6l3.0 -2.6l3.0 2.6l3.0 -2.6l1.3 1.1 M476.9 677.9l3.0 2.6l3.0 -2.6l3.0 2.6l3.0 -2.6l3.0 2.6l3.0 -2.6l3.0 2.6l3.0 -2.6l3.0 2.6l3.0 -2.6l3.0 2.6l3.0 -2.6l3.0 2.6l3.0 -2.6l3.0 2.6l3.0 -2.6l3.0 2.6l3.0 -2.6l3.0 2.6l3.0 -2.6l3.0 2.6l3.0 -2.6l3.0 2.6l3.0 -2.6l3.0 2.6l3.0 -2.6l3.0 2.6l1.0 -0.9 M570.3 677.9l3.0 2.6l3.0 -2.6l3.0 2.6l3.0 -2.6l3.0 2.6l3.0 -2.6l3.0 2.6l3.0 -2.6l3.0 2.6l3.0 -2.6l3.0 2.6l3.0 -2.6l3.0 2.6l3.0 -2.6l3.0 2.6l3.0 -2.6l3.0 2.6l3.0 -2.6l3.0 2.6l3.0 -2.6l3.0 2.6l3.0 -2.6l1.1 0.9 M643.1 677.9l3.0 2.6l3.0 -2.6l3.0 2.6l3.0 -2.6l3.0 2.6l3.0 -2.6l1.4 1.2 M668.2 677.9l3.0 2.6l3.0 -2.6l3.0 2.6l3.0 -2.6l3.0 2.6l3.0 -2.6l3.0 2.6l3.0 -2.6l3.0 2.6l3.0 -2.6l3.0 2.6l3.0 -2.6l3.0 2.6l3.0 -2.6l3.0 2.6l3.0 -2.6l3.0 2.6l3.0 -2.6l3.0 2.6l3.0 -2.6l1.6 1.4 M735.5 677.9l3.0 2.6l3.0 -2.6l3.0 2.6l3.0 -2.6l3.0 2.6l3.0 -2.6l3.0 2.6l3.0 -2.6l3.0 2.6l3.0 -2.6l3.0 2.6l3.0 -2.6l3.0 2.6l3.0 -2.6l3.0 2.6 M786.6 677.9l3.0 2.6l3.0 -2.6l3.0 2.6l3.0 -2.6l3.0 2.6l3.0 -2.6l3.0 2.6l3.0 -2.6l3.0 2.6l3.0 -2.6l3.0 2.6l3.0 -2.6l3.0 2.6l3.0 -2.6l3.0 2.6l3.0 -2.6l3.0 2.6l3.0 -2.6l3.0 2.6l3.0 -2.6l3.0 2.6l3.0 -2.6l3.0 2.6l3.0 -2.6l3.0 2.6l3.0 -2.6l3.0 2.6l3.0 -2.6l3.0 2.6l3.0 -2.6l3.0 2.6l3.0 -2.6l3.0 2.6l3.0 -2.6 M919.9 677.9l3.0 2.6l3.0 -2.6l3.0 2.6l3.0 -2.6l3.0 2.6l3.0 -2.6l3.0 2.6l3.0 -2.6l3.0 2.6l3.0 -2.6l3.0 2.6l3.0 -2.6l3.0 2.6l3.0 -2.6l3.0 2.6l3.0 -2.6l3.0 2.6l3.0 -2.6l3.0 2.6l3.0 -2.6l2.8 2.4 M1154.8 677.9l3.0 2.6l3.0 -2.6l3.0 2.6l3.0 -2.6l3.0 2.6l3.0 -2.6l3.0 2.6l3.0 -2.6l3.0 2.6l3.0 -2.6l3.0 2.6l3.0 -2.6l3.0 2.6l3.0 -2.6l3.0 2.6l3.0 -2.6l3.0 2.6l3.0 -2.6l3.0 2.6l3.0 -2.6l3.0 2.6 M1223.3 677.9l3.0 2.6l3.0 -2.6l3.0 2.6l3.0 -2.6l3.0 2.6l3.0 -2.6l3.0 2.6l3.0 -2.6l3.0 2.6l3.0 -2.6l3.0 2.6l3.0 -2.6l3.0 2.6l3.0 -2.6l3.0 2.6l3.0 -2.6l3.0 2.6l3.0 -2.6l3.0 2.6l3.0 -2.6l3.0 2.6l3.0 -2.6l3.0 2.6l3.0 -2.6l3.0 2.6l3.0 -2.6l2.6 2.2 M476.9 709.9l3.0 2.6l3.0 -2.6l3.0 2.6l3.0 -2.6l3.0 2.6l3.0 -2.6l3.0 2.6l3.0 -2.6l3.0 2.6l3.0 -2.6l3.0 2.6l3.0 -2.6l3.0 2.6l3.0 -2.6l3.0 2.6l1.5 -1.3 M725.3 709.9l3.0 2.6l3.0 -2.6l3.0 2.6l3.0 -2.6l3.0 2.6l3.0 -2.6l3.0 2.6l3.0 -2.6l3.0 2.6l3.0 -2.6l3.0 2.6l3.0 -2.6l3.0 2.6l3.0 -2.6l3.0 2.6l3.0 -2.6l3.0 2.6l3.0 -2.6l3.0 2.6l3.0 -2.6l3.0 2.6l3.0 -2.6l3.0 2.6l3.0 -2.6l3.0 2.6l3.0 -2.6l3.0 2.6l3.0 -2.6l3.0 2.6 M818.0 709.9l3.0 2.6l3.0 -2.6l3.0 2.6l3.0 -2.6l3.0 2.6l3.0 -2.6l3.0 2.6l3.0 -2.6l3.0 2.6l3.0 -2.6l3.0 2.6l3.0 -2.6l3.0 2.6l3.0 -2.6l3.0 2.6l3.0 -2.6l3.0 2.6l3.0 -2.6l3.0 2.6l3.0 -2.6l3.0 2.6l3.0 -2.6l3.0 2.6l3.0 -2.6l3.0 2.6l3.0 -2.6l3.0 2.6l0.6 -0.6 M905.3 709.9l3.0 2.6l3.0 -2.6l3.0 2.6l3.0 -2.6l3.0 2.6l3.0 -2.6l3.0 2.6l3.0 -2.6l3.0 2.6l3.0 -2.6l3.0 2.6l3.0 -2.6l3.0 2.6l3.0 -2.6l3.0 2.6l3.0 -2.6l3.0 2.6l3.0 -2.6l3.0 2.6l3.0 -2.6l3.0 2.6l3.0 -2.6l3.0 2.6l3.0 -2.6l1.6 1.4 M984.6 709.9l3.0 2.6l3.0 -2.6l3.0 2.6l3.0 -2.6l3.0 2.6l3.0 -2.6l3.0 2.6l3.0 -2.6l3.0 2.6l3.0 -2.6l3.0 2.6l3.0 -2.6l3.0 2.6l3.0 -2.6l3.0 2.6l3.0 -2.6l3.0 2.6l3.0 -2.6l3.0 2.6l1.6 -1.4 M1055.9 709.9l3.0 2.6l3.0 -2.6l3.0 2.6l3.0 -2.6l3.0 2.6l3.0 -2.6l3.0 2.6l3.0 -2.6l3.0 2.6l3.0 -2.6l3.0 2.6l3.0 -2.6l3.0 2.6l3.0 -2.6l3.0 2.6l3.0 -2.6l3.0 2.6l3.0 -2.6l3.0 2.6l3.0 -2.6l3.0 2.6l3.0 -2.6l3.0 2.6l3.0 -2.6l3.0 2.6l3.0 -2.6l3.0 2.6l3.0 -2.6l3.0 2.6l3.0 -2.6l3.0 2.6l3.0 -2.6l3.0 2.6l3.0 -2.6l3.0 2.6l3.0 -2.6l3.0 2.6l3.0 -2.6l3.0 2.6l3.0 -2.6l3.0 2.6l3.0 -2.6l3.0 2.6l3.0 -2.6l2.4 2.1 M1196.1 709.9l3.0 2.6l3.0 -2.6l3.0 2.6l3.0 -2.6l3.0 2.6l3.0 -2.6l3.0 2.6l3.0 -2.6l3.0 2.6l3.0 -2.6l3.0 2.6l3.0 -2.6l3.0 2.6l3.0 -2.6l3.0 2.6l3.0 -2.6l3.0 2.6l3.0 -2.6l3.0 2.6l3.0 -2.6l3.0 2.6l3.0 -2.6l3.0 2.6l2.2 -1.9 M1273.1 709.9l3.0 2.6l3.0 -2.6l3.0 2.6l3.0 -2.6l3.0 2.6l3.0 -2.6l3.0 2.6l3.0 -2.6l3.0 2.6l3.0 -2.6l3.0 2.6l3.0 -2.6l3.0 2.6l3.0 -2.6l3.0 2.6l3.0 -2.6l3.0 2.6l3.0 -2.6l3.0 2.6l3.0 -2.6l3.0 2.6l3.0 -2.6l3.0 2.6 M1378.3 709.9l3.0 2.6l3.0 -2.6l3.0 2.6l3.0 -2.6l3.0 2.6l3.0 -2.6l3.0 2.6l3.0 -2.6l3.0 2.6l3.0 -2.6l3.0 2.6l3.0 -2.6l3.0 2.6l3.0 -2.6l3.0 2.6l3.0 -2.6l3.0 2.6l3.0 -2.6l3.0 2.6l3.0 -2.6l1.2 1.1 M527.7 740.9l3.0 2.6l3.0 -2.6l3.0 2.6l3.0 -2.6l3.0 2.6l3.0 -2.6l3.0 2.6l3.0 -2.6l3.0 2.6l3.0 -2.6l3.0 2.6l3.0 -2.6l3.0 2.6l3.0 -2.6l3.0 2.6l3.0 -2.6l3.0 2.6l3.0 -2.6l0.9 0.8 M665.2 740.9l3.0 2.6l3.0 -2.6l3.0 2.6l3.0 -2.6l3.0 2.6l3.0 -2.6l3.0 2.6l3.0 -2.6l3.0 2.6l3.0 -2.6l3.0 2.6l3.0 -2.6l3.0 2.6l3.0 -2.6l3.0 2.6l3.0 -2.6l3.0 2.6l3.0 -2.6l3.0 2.6l3.0 -2.6l3.0 2.6l3.0 -2.6l3.0 2.6l1.3 -1.1 M741.1 740.9l3.0 2.6l3.0 -2.6l3.0 2.6l3.0 -2.6l3.0 2.6l3.0 -2.6l3.0 2.6l3.0 -2.6l3.0 2.6l3.0 -2.6l3.0 2.6l3.0 -2.6l3.0 2.6l3.0 -2.6l3.0 2.6l3.0 -2.6l3.0 2.6l3.0 -2.6l3.0 2.6l3.0 -2.6l3.0 2.6l3.0 -2.6l3.0 2.6l3.0 -2.6l3.0 2.6l3.0 -2.6l3.0 2.6l3.0 -2.6l3.0 2.6l3.0 -2.6l3.0 2.6l3.0 -2.6l3.0 2.6l3.0 -2.6l3.0 2.6l3.0 -2.6l3.0 2.6l3.0 -2.6l3.0 2.6l1.2 -1.1 M864.8 740.9l3.0 2.6l3.0 -2.6l3.0 2.6l3.0 -2.6l3.0 2.6l3.0 -2.6l3.0 2.6l3.0 -2.6l3.0 2.6l3.0 -2.6l3.0 2.6l3.0 -2.6l3.0 2.6l3.0 -2.6l3.0 2.6l3.0 -2.6l3.0 2.6l3.0 -2.6l3.0 2.6l3.0 -2.6l2.3 2.0 M932.7 740.9l3.0 2.6l3.0 -2.6l3.0 2.6l3.0 -2.6l3.0 2.6l3.0 -2.6l3.0 2.6l3.0 -2.6l3.0 2.6l3.0 -2.6l3.0 2.6l3.0 -2.6l3.0 2.6l3.0 -2.6l3.0 2.6l3.0 -2.6l3.0 2.6l3.0 -2.6l3.0 2.6l1.0 -0.9 M996.0 740.9l3.0 2.6l3.0 -2.6l3.0 2.6l3.0 -2.6l3.0 2.6l3.0 -2.6l3.0 2.6l3.0 -2.6l3.0 2.6l3.0 -2.6l3.0 2.6l3.0 -2.6l3.0 2.6l3.0 -2.6l3.0 2.6l3.0 -2.6l2.0 1.7 M1084.3 740.9l3.0 2.6l3.0 -2.6l3.0 2.6l3.0 -2.6l3.0 2.6l3.0 -2.6l3.0 2.6l3.0 -2.6l3.0 2.6l3.0 -2.6l3.0 2.6l3.0 -2.6l3.0 2.6l3.0 -2.6l3.0 2.6l3.0 -2.6l3.0 2.6l3.0 -2.6l3.0 2.6l3.0 -2.6l2.2 1.9 M1391.3 740.9l3.0 2.6l3.0 -2.6l3.0 2.6l3.0 -2.6l3.0 2.6l3.0 -2.6l3.0 2.6l3.0 -2.6l3.0 2.6l3.0 -2.6l3.0 2.6l3.0 -2.6l3.0 2.6l3.0 -2.6l3.0 2.6l3.0 -2.6l3.0 2.6l3.0 -2.6l3.0 2.6 M476.9 772.9l3.0 2.6l3.0 -2.6l3.0 2.6l3.0 -2.6l3.0 2.6l3.0 -2.6l3.0 2.6l3.0 -2.6l3.0 2.6l3.0 -2.6l3.0 2.6l3.0 -2.6l3.0 2.6l3.0 -2.6l3.0 2.6l3.0 -2.6l3.0 2.6l3.0 -2.6l3.0 2.6l3.0 -2.6l3.0 2.6l3.0 -2.6l3.0 2.6l3.0 -2.6l3.0 2.6l3.0 -2.6l3.0 2.6l1.1 -0.9 M680.4 772.9l3.0 2.6l3.0 -2.6l3.0 2.6l3.0 -2.6l3.0 2.6l3.0 -2.6l3.0 2.6l3.0 -2.6l3.0 2.6l3.0 -2.6l3.0 2.6l3.0 -2.6l3.0 2.6l3.0 -2.6l3.0 2.6l3.0 -2.6l3.0 2.6l3.0 -2.6l3.0 2.6l0.8 -0.7 M743.9 772.9l3.0 2.6l3.0 -2.6l3.0 2.6l3.0 -2.6l3.0 2.6l3.0 -2.6l3.0 2.6l3.0 -2.6l3.0 2.6l3.0 -2.6l3.0 2.6l3.0 -2.6l3.0 2.6l3.0 -2.6l3.0 2.6l3.0 -2.6l3.0 2.6l3.0 -2.6l3.0 2.6l3.0 -2.6l3.0 2.6l3.0 -2.6l3.0 2.6l3.0 -2.6l3.0 2.6l3.0 -2.6l3.0 2.6l3.0 -2.6l3.0 2.6l3.0 -2.6l3.0 2.6l3.0 -2.6l3.0 2.6l3.0 -2.6l3.0 2.6l3.0 -2.6l3.0 2.6l3.0 -2.6l1.5 1.3 M959.4 772.9l3.0 2.6l3.0 -2.6l3.0 2.6l3.0 -2.6l3.0 2.6l3.0 -2.6l3.0 2.6l3.0 -2.6l3.0 2.6l3.0 -2.6l3.0 2.6l3.0 -2.6l3.0 2.6l3.0 -2.6l3.0 2.6l3.0 -2.6l3.0 2.6l3.0 -2.6l3.0 2.6l3.0 -2.6l3.0 2.6l3.0 -2.6l3.0 2.6l3.0 -2.6l3.0 2.6l3.0 -2.6l3.0 2.6l3.0 -2.6l3.0 2.6l3.0 -2.6l3.0 2.6l3.0 -2.6l3.0 2.6l3.0 -2.6l3.0 2.6l3.0 -2.6l3.0 2.6l2.6 -2.2 M1176.9 772.9l3.0 2.6l3.0 -2.6l3.0 2.6l3.0 -2.6l3.0 2.6l3.0 -2.6l3.0 2.6l3.0 -2.6l3.0 2.6l3.0 -2.6l3.0 2.6l3.0 -2.6l3.0 2.6l3.0 -2.6l3.0 2.6l3.0 -2.6l3.0 2.6l3.0 -2.6l3.0 2.6 M1239.9 772.9l3.0 2.6l3.0 -2.6l3.0 2.6l3.0 -2.6l3.0 2.6l3.0 -2.6l3.0 2.6l3.0 -2.6l3.0 2.6l3.0 -2.6l3.0 2.6l3.0 -2.6l3.0 2.6l3.0 -2.6l3.0 2.6l3.0 -2.6l3.0 2.6l3.0 -2.6l3.0 2.6l3.0 -2.6l3.0 2.6l3.0 -2.6l3.0 2.6l3.0 -2.6l3.0 2.6l3.0 -2.6l3.0 2.6l0.5 -0.5 M1327.0 772.9l3.0 2.6l3.0 -2.6l3.0 2.6l3.0 -2.6l3.0 2.6l3.0 -2.6l3.0 2.6l3.0 -2.6l3.0 2.6l3.0 -2.6l3.0 2.6l3.0 -2.6l3.0 2.6l3.0 -2.6l3.0 2.6l3.0 -2.6l3.0 2.6l3.0 -2.6l3.0 2.6l3.0 -2.6l3.0 2.6l3.0 -2.6l3.0 2.6l3.0 -2.6l3.0 2.6l3.0 -2.6l3.0 2.6l3.0 -2.6l3.0 2.6l3.0 -2.6l3.0 2.6l3.0 -2.6l3.0 2.6l3.0 -2.6l3.0 2.6l3.0 -2.6l3.0 2.6l2.5 -2.2 M476.9 803.9l3.0 2.6l3.0 -2.6l3.0 2.6l3.0 -2.6l3.0 2.6l3.0 -2.6l3.0 2.6l3.0 -2.6l3.0 2.6l3.0 -2.6l3.0 2.6l3.0 -2.6l3.0 2.6l3.0 -2.6l3.0 2.6l3.0 -2.6l3.0 2.6l3.0 -2.6l3.0 2.6l3.0 -2.6l3.0 2.6l3.0 -2.6l3.0 2.6 M551.7 803.9l3.0 2.6l3.0 -2.6l3.0 2.6l3.0 -2.6l3.0 2.6l3.0 -2.6l3.0 2.6l3.0 -2.6l3.0 2.6l3.0 -2.6l3.0 2.6l3.0 -2.6l3.0 2.6l3.0 -2.6l3.0 2.6l3.0 -2.6l3.0 2.6l1.3 -1.2 M609.8 803.9l3.0 2.6l3.0 -2.6l3.0 2.6l3.0 -2.6l3.0 2.6l3.0 -2.6l3.0 2.6l3.0 -2.6l3.0 2.6l3.0 -2.6l3.0 2.6l3.0 -2.6l3.0 2.6l3.0 -2.6l2.2 2.0 M659.9 803.9l3.0 2.6l3.0 -2.6l3.0 2.6l3.0 -2.6l3.0 2.6l3.0 -2.6l3.0 2.6l3.0 -2.6l3.0 2.6l3.0 -2.6l3.0 2.6l2.6 -2.2 M701.2 803.9l3.0 2.6l3.0 -2.6l3.0 2.6l3.0 -2.6l3.0 2.6l3.0 -2.6l3.0 2.6l3.0 -2.6l3.0 2.6l3.0 -2.6l3.0 2.6l3.0 -2.6l3.0 2.6l3.0 -2.6l3.0 2.6l3.0 -2.6l3.0 2.6l3.0 -2.6l3.0 2.6l3.0 -2.6l3.0 2.6l3.0 -2.6l3.0 2.6l3.0 -2.6l3.0 2.6l3.0 -2.6l3.0 2.6l3.0 -2.6l3.0 2.6l3.0 -2.6l3.0 2.6l3.0 -2.6l3.0 2.6l3.0 -2.6l3.0 2.6l3.0 -2.6l3.0 2.6l3.0 -2.6l3.0 2.6l3.0 -2.6l3.0 2.6l3.0 -2.6l3.0 2.6l3.0 -2.6l3.0 2.6l3.0 -2.6l2.4 2.1 M871.3 803.9l3.0 2.6l3.0 -2.6l3.0 2.6l3.0 -2.6l3.0 2.6l3.0 -2.6l3.0 2.6l3.0 -2.6l3.0 2.6l3.0 -2.6l3.0 2.6l3.0 -2.6l3.0 2.6l3.0 -2.6l3.0 2.6l3.0 -2.6l3.0 2.6l3.0 -2.6l3.0 2.6l3.0 -2.6l3.0 2.6l3.0 -2.6l3.0 2.6l3.0 -2.6l3.0 2.6l3.0 -2.6l3.0 2.6l3.0 -2.6l3.0 2.6l3.0 -2.6l3.0 2.6l3.0 -2.6l3.0 2.6l1.8 -1.5 M996.0 803.9l3.0 2.6l3.0 -2.6l3.0 2.6l3.0 -2.6l3.0 2.6l3.0 -2.6l3.0 2.6l3.0 -2.6l3.0 2.6l3.0 -2.6l3.0 2.6l3.0 -2.6l3.0 2.6l3.0 -2.6l3.0 2.6l3.0 -2.6l3.0 2.6l3.0 -2.6l3.0 2.6l3.0 -2.6l3.0 2.6l3.0 -2.6l3.0 2.6l3.0 -2.6l3.0 2.6l3.0 -2.6l3.0 2.6l3.0 -2.6l3.0 2.6l3.0 -2.6l3.0 2.6l3.0 -2.6l3.0 2.6l3.0 -2.6l3.0 2.6l3.0 -2.6l3.0 2.6l3.0 -2.6l3.0 2.6l3.0 -2.6l3.0 2.6l3.0 -2.6l3.0 2.6l3.0 -2.6l3.0 2.6l3.0 -2.6l2.6 2.3 M1318.5 803.9l3.0 2.6l3.0 -2.6l3.0 2.6l3.0 -2.6l3.0 2.6l3.0 -2.6l3.0 2.6l3.0 -2.6l3.0 2.6l3.0 -2.6l3.0 2.6l3.0 -2.6l3.0 2.6l3.0 -2.6l3.0 2.6l3.0 -2.6l3.0 2.6l3.0 -2.6l3.0 2.6l3.0 -2.6l3.0 2.6l3.0 -2.6l3.0 2.6l3.0 -2.6l3.0 2.6l3.0 -2.6l3.0 2.6l2.0 -1.7 M476.9 834.9l3.0 2.6l3.0 -2.6l3.0 2.6l3.0 -2.6l3.0 2.6l3.0 -2.6l3.0 2.6l3.0 -2.6l3.0 2.6l3.0 -2.6l3.0 2.6l3.0 -2.6l3.0 2.6l3.0 -2.6l3.0 2.6l3.0 -2.6l3.0 2.6l3.0 -2.6l3.0 2.6l3.0 -2.6l3.0 2.6l3.0 -2.6l3.0 2.6l1.3 -1.1 M553.1 834.9l3.0 2.6l3.0 -2.6l3.0 2.6l3.0 -2.6l3.0 2.6l3.0 -2.6l3.0 2.6l3.0 -2.6l3.0 2.6l3.0 -2.6l3.0 2.6l3.0 -2.6l3.0 2.6l3.0 -2.6l3.0 2.6l3.0 -2.6l3.0 2.6l3.0 -2.6l3.0 2.6l3.0 -2.6l3.0 2.6l3.0 -2.6l3.0 2.6l3.0 -2.6l3.0 2.6l3.0 -2.6l3.0 2.6l1.6 -1.4 M641.6 834.9l3.0 2.6l3.0 -2.6l3.0 2.6l3.0 -2.6l3.0 2.6l3.0 -2.6l3.0 2.6l3.0 -2.6l3.0 2.6l3.0 -2.6l3.0 2.6l3.0 -2.6l3.0 2.6l3.0 -2.6l3.0 2.6l3.0 -2.6l3.0 2.6l3.0 -2.6l3.0 2.6l0.6 -0.5 M705.1 834.9l3.0 2.6l3.0 -2.6l3.0 2.6l3.0 -2.6l3.0 2.6l3.0 -2.6l3.0 2.6l3.0 -2.6l3.0 2.6l3.0 -2.6l3.0 2.6l3.0 -2.6l3.0 2.6l3.0 -2.6l3.0 2.6l2.7 -2.4 M588.0 931.9l3.0 2.6l3.0 -2.6l3.0 2.6l3.0 -2.6l3.0 2.6l3.0 -2.6l3.0 2.6l3.0 -2.6l3.0 2.6l3.0 -2.6l3.0 2.6l3.0 -2.6l3.0 2.6l3.0 -2.6l3.0 2.6l3.0 -2.6l3.0 2.6l3.0 -2.6l3.0 2.6l1.0 -0.8 M651.7 931.9l3.0 2.6l3.0 -2.6l3.0 2.6l3.0 -2.6l3.0 2.6l3.0 -2.6l3.0 2.6l3.0 -2.6l3.0 2.6l3.0 -2.6l3.0 2.6l3.0 -2.6l3.0 2.6l3.0 -2.6l3.0 2.6l3.0 -2.6l3.0 2.6l3.0 -2.6l3.0 2.6l3.0 -2.6l3.0 2.6l3.0 -2.6l3.0 2.6l3.0 -2.6l3.0 2.6l3.0 -2.6l3.0 2.6l3.0 -2.6l3.0 2.6l1.5 -1.3 M769.9 931.9l3.0 2.6l3.0 -2.6l3.0 2.6l3.0 -2.6l3.0 2.6l3.0 -2.6l3.0 2.6l3.0 -2.6l3.0 2.6l3.0 -2.6l3.0 2.6l3.0 -2.6l3.0 2.6l3.0 -2.6l3.0 2.6l3.0 -2.6l3.0 2.6l3.0 -2.6l3.0 2.6l3.0 -2.6l3.0 2.6l3.0 -2.6l3.0 2.6l0.8 -0.7 M845.5 931.9l3.0 2.6l3.0 -2.6l3.0 2.6l3.0 -2.6l3.0 2.6l3.0 -2.6l3.0 2.6l3.0 -2.6l3.0 2.6l3.0 -2.6l3.0 2.6l3.0 -2.6l3.0 2.6l3.0 -2.6l3.0 2.6l3.0 -2.6l1.9 1.6 M901.1 931.9l3.0 2.6l3.0 -2.6l3.0 2.6l3.0 -2.6l3.0 2.6l3.0 -2.6l3.0 2.6l3.0 -2.6l3.0 2.6l3.0 -2.6l3.0 2.6l3.0 -2.6l3.0 2.6l3.0 -2.6l3.0 2.6l3.0 -2.6l3.0 2.6l3.0 -2.6l3.0 2.6l3.0 -2.6l3.0 2.6l3.0 -2.6l3.0 2.6l2.0 -1.8 M1285.1 931.9l3.0 2.6l3.0 -2.6l3.0 2.6l3.0 -2.6l3.0 2.6l3.0 -2.6l3.0 2.6l3.0 -2.6l3.0 2.6l3.0 -2.6l3.0 2.6l3.0 -2.6l3.0 2.6l3.0 -2.6l3.0 2.6l3.0 -2.6l3.0 2.6l3.0 -2.6l3.0 2.6l3.0 -2.6l3.0 2.6l3.0 -2.6l3.0 2.6l3.0 -2.6l3.0 2.6l3.0 -2.6l3.0 2.6l3.0 -2.6 M1374.6 931.9l3.0 2.6l3.0 -2.6l3.0 2.6l3.0 -2.6l3.0 2.6l3.0 -2.6l3.0 2.6l3.0 -2.6l3.0 2.6l3.0 -2.6l3.0 2.6l3.0 -2.6l3.0 2.6l3.0 -2.6l3.0 2.6l3.0 -2.6l3.0 2.6l3.0 -2.6l3.0 2.6l1.1 -0.9 M476.9 963.9l3.0 2.6l3.0 -2.6l3.0 2.6l3.0 -2.6l3.0 2.6l3.0 -2.6l3.0 2.6l3.0 -2.6l3.0 2.6l3.0 -2.6l1.3 1.1 M514.0 963.9l3.0 2.6l3.0 -2.6l3.0 2.6l3.0 -2.6l3.0 2.6l3.0 -2.6l3.0 2.6l3.0 -2.6l3.0 2.6l3.0 -2.6l3.0 2.6l3.0 -2.6l3.0 2.6l3.0 -2.6l3.0 2.6l1.8 -1.6 M566.6 963.9l3.0 2.6l3.0 -2.6l3.0 2.6l3.0 -2.6l3.0 2.6l3.0 -2.6l3.0 2.6l3.0 -2.6l3.0 2.6l3.0 -2.6l3.0 2.6l3.0 -2.6l3.0 2.6l3.0 -2.6l3.0 2.6l3.0 -2.6l3.0 2.6l3.0 -2.6l3.0 2.6l3.0 -2.6l3.0 2.6l3.0 -2.6l3.0 2.6l3.0 -2.6l3.0 2.6l3.0 -2.6l3.0 2.6l3.0 -2.6l3.0 2.6l0.9 -0.8 M836.4 963.9l3.0 2.6l3.0 -2.6l3.0 2.6l3.0 -2.6l3.0 2.6l3.0 -2.6l3.0 2.6l3.0 -2.6l3.0 2.6l3.0 -2.6l3.0 2.6l3.0 -2.6l3.0 2.6l3.0 -2.6l3.0 2.6l3.0 -2.6l3.0 2.6l3.0 -2.6l3.0 2.6l3.0 -2.6l0.6 0.5 M902.8 963.9l3.0 2.6l3.0 -2.6l3.0 2.6l3.0 -2.6l3.0 2.6l3.0 -2.6l3.0 2.6l3.0 -2.6l3.0 2.6l3.0 -2.6l3.0 2.6l3.0 -2.6l3.0 2.6l3.0 -2.6l3.0 2.6l3.0 -2.6l3.0 2.6l3.0 -2.6l3.0 2.6l3.0 -2.6l3.0 2.6l3.0 -2.6l3.0 2.6l3.0 -2.6l3.0 2.6l3.0 -2.6l3.0 2.6l1.3 -1.1 M990.8 963.9l3.0 2.6l3.0 -2.6l3.0 2.6l3.0 -2.6l3.0 2.6l3.0 -2.6l1.5 1.3 M1016.2 963.9l3.0 2.6l3.0 -2.6l3.0 2.6l3.0 -2.6l3.0 2.6l3.0 -2.6l3.0 2.6l3.0 -2.6l3.0 2.6l3.0 -2.6l3.0 2.6l3.0 -2.6l3.0 2.6l3.0 -2.6l3.0 2.6l3.0 -2.6l3.0 2.6l3.0 -2.6l3.0 2.6l3.0 -2.6l3.0 2.6l3.0 -2.6l3.0 2.6l3.0 -2.6l3.0 2.6l3.0 -2.6l3.0 2.6l0.5 -0.4 M1103.5 963.9l3.0 2.6l3.0 -2.6l3.0 2.6l3.0 -2.6l3.0 2.6l3.0 -2.6l3.0 2.6l3.0 -2.6l3.0 2.6l3.0 -2.6l1.3 1.2 M1256.6 963.9l3.0 2.6l3.0 -2.6l3.0 2.6l3.0 -2.6l3.0 2.6l3.0 -2.6l3.0 2.6l3.0 -2.6l3.0 2.6l3.0 -2.6l3.0 2.6l3.0 -2.6l3.0 2.6l3.0 -2.6l3.0 2.6l3.0 -2.6l3.0 2.6l3.0 -2.6l3.0 2.6l3.0 -2.6l3.0 2.6l3.0 -2.6l3.0 2.6l3.0 -2.6l3.0 2.6l3.0 -2.6l3.0 2.6l2.2 -1.9 M1345.7 963.9l3.0 2.6l3.0 -2.6l3.0 2.6l3.0 -2.6l3.0 2.6l3.0 -2.6l3.0 2.6l3.0 -2.6l3.0 2.6l3.0 -2.6l3.0 2.6l3.0 -2.6l3.0 2.6l3.0 -2.6l2.4 2.1"/>
</svg>
<!-- status bar overlays page bottom -->
<div class="b" style="z-index:2;left:0px;top:993px;width:1920px;height:28px;background:#141414;border-top:1px solid #3a3a3a;"></div>
<div class="b" style="z-index:2;left:1598px;top:994px;width:50px;height:26px;background:#262626;"></div>
<div class="b" style="z-index:2;left:0px;top:1020px;width:1920px;height:1px;background:#3c3c3c;"></div>
<div class="b" style="z-index:2;left:0px;top:1021px;width:1920px;height:7px;background:#1c1c1c;"></div>
<svg width="1920" height="1028" viewBox="0 0 1920 1028" fill="none" stroke-linecap="round" stroke-linejoin="round">
<!-- TITLEBAR ICONS -->
<g id="word-logo" stroke="none">
<path d="M24.5 20h15a1 1 0 0 1 1 1v4.2h-17v-4.2a1 1 0 0 1 1-1z" fill="#41a5ee"/>
<rect x="23.5" y="25" width="17" height="5" fill="#2b7cd3"/>
<rect x="23.5" y="30" width="17" height="5" fill="#185abd"/>
<path d="M23.5 35h17v4a1 1 0 0 1-1 1h-15a1 1 0 0 1-1-1z" fill="#103f91"/>
<rect x="19.5" y="23.5" width="14" height="13" rx="1.2" fill="#185abd"/>
</g>
<g id="save" stroke="#f2f2f2" stroke-width="1.4" stroke-linejoin="miter" stroke-linecap="butt">
<path d="M220.800 27.500v-6.800h-18.100v16l2.400 2.500h2.700"/>
<path d="M207 20.700v6.600h10v-6.600"/>
<path d="M207.200 39.200v-6.200h2.800"/>
<path d="M211.400 33.200a5.300 5.300 0 0 1 9.200-2.600M221 27.600v3.200h-3.200M221.600 36.200a5.300 5.300 0 0 1-9.200 2.600M212 41.200v-3.200h3.200" stroke-width="1.300" stroke-linecap="round" stroke-linejoin="round"/>
</g>
<g id="undo" stroke="#f2f2f2" stroke-width="1.5">
<path d="M239 20.6v7.8h7.8"/>
<path d="M239.3 28.1l4.7-4.7a6.5 6.5 0 0 1 9.3 9.1l-7.8 6.6"/>
<path d="M265.2 28l3.2 3.3 3.2-3.3"/>
</g>
<g id="redo" stroke="#6a6a6a" stroke-width="1.5">
<path d="M285.8 20.8h7.2v7.2"/>
<path d="M292.6 21.6a9.2 9.2 0 1 0 8.4 1.5"/>
</g>
<g id="sun" stroke="#f2f2f2" stroke-width="1.4">
<circle cx="330" cy="30" r="4.600"/>
<path d="M336.4 27.4L339.1 26.2M332.6 23.6L333.8 20.9M327.4 23.6L326.2 20.9M323.6 27.4L320.9 26.2M323.6 32.6L320.9 33.8M327.4 36.4L326.2 39.1M332.6 36.4L333.8 39.1M336.4 32.6L339.1 33.8" stroke-width="1.300"/>
</g>
<g id="qat" stroke="#f2f2f2" stroke-width="1.3">
<path d="M360.3 27.4h8.4M361 31.4l3.5 3.4 3.5-3.4"/>
</g>
<path d="M568.3 27.3l5.6 5.5 5.6-5.5" stroke="#f2f2f2" stroke-width="1.4"/>
<g id="search" stroke="#a6a6a6" stroke-width="1.4">
<circle cx="749.2" cy="27.4" r="6.1"/><path d="M744.8 31.8l-6.3 6.5"/>
</g>
<g id="winctl" stroke="#f2f2f2" stroke-width="1.3">
<path d="M1763.5 29h13"/>
<rect x="1823.7" y="26.4" width="10" height="10" rx="2"/>
<path d="M1826.5 23.8h6.2a3.8 3.8 0 0 1 3.8 3.8v6.2"/>
<path d="M1883.7 23.8l12.6 12.6M1896.3 23.8l-12.6 12.6"/>
</g>
<!-- TAB ROW BUTTON ICONS -->
<g id="comment-ic" stroke="#f2f2f2" stroke-width="1.3">
<path d="M1561.5 73.5h11.8v8h-7l-3 3v-3h-1.8z"/>
</g>
<g id="pencil" stroke="#f2f2f2" stroke-width="1.3">
<path d="M1691.2 87.6l1.3-5 12.4-12.4a2.4 2.4 0 0 1 3.5 3.5l-12.4 12.4z"/>
<path d="M1703 72.2l3.5 3.5M1692.5 82.6l3.5 3.5"/>
</g>
<path d="M1774.600 77l3 3 3-3" stroke="#f2f2f2" stroke-width="1.400"/>
<g id="share-ic" stroke="#0a0a0a" stroke-width="1.3">
<path d="M1818.5 74.6h-2.6a1.6 1.6 0 0 0-1.6 1.6v7.4a1.6 1.6 0 0 0 1.6 1.6h8.6a1.6 1.6 0 0 0 1.6-1.6v-1.4"/>
<path d="M1822.8 71.8l4.4 3.8-4.4 3.8v-2.3c-2.6 0-4.3.8-5.3 2.6.2-3.2 2-5.4 5.3-5.7z"/>
</g>
<path d="M1891.300 77l3 3 3-3" stroke="#0a0a0a" stroke-width="1.400"/>
<!-- RIBBON ICONS -->
<g id="ic-read" stroke="#c8c8c8" stroke-width="1.5" stroke-linejoin="miter" stroke-linecap="butt">
<path d="M50.6 114.2c-1.6-1.5-3.6-2.2-6-2.2h-11.8v27h11.8c2.4 0 4.4 .9 6 2.6c1.6-1.7 3.600-2.600 6-2.600h11.800v-27h-11.800c-2.400 0-4.400 .7-6 2.200zM50.600 114.200v27"/>
<path d="M37 118h9M37 123h9M37 128h9M37 133h9M54.800 133h9" stroke="#8c8c8c" stroke-width="1.400"/>
<rect x="55.500" y="117.700" width="7.700" height="10.400" stroke="#8c8c8c"/>
</g>
<g id="ic-print" stroke="#c8c8c8" stroke-width="1.600" stroke-linejoin="miter" stroke-linecap="butt">
<rect x="92" y="109" width="26.100" height="34"/>
<path d="M96.200 115.300h17.700M96.200 120.300h17.700M96.200 125.300h17.700M96.200 130.300h17.700M96.200 135.300h17.700" stroke="#9a9a9a" stroke-width="1.300"/>
</g>
<g id="ic-web" stroke-linejoin="miter" stroke-linecap="butt">
<rect x="142" y="112.900" width="34" height="26.200" stroke="#c8c8c8" stroke-width="1.500"/>
<path d="M146.200 118h11.600M146.200 123h11.600M146.200 128h11.600M146.200 133h11.600" stroke="#8c8c8c" stroke-width="1.400"/>
<path d="M162 131v-13.300h9.500v13.300" stroke="#8c8c8c" stroke-width="1.500"/>
<circle cx="169.600" cy="136.500" r="10.600" fill="#292929" stroke="none"/>
<g stroke="#3a96dd" stroke-width="1.400">
<circle cx="169.600" cy="136.500" r="8.800"/>
<ellipse cx="169.600" cy="136.500" rx="4.600" ry="8.800"/>
<path d="M169.600 127.700v17.600M161.600 133h16M161.600 140h16"/>
</g>
</g>
<g id="ic-outline" stroke-linejoin="miter" stroke-linecap="butt">
<rect x="192.800" y="108.700" width="18.500" height="16.400" stroke="#c8c8c8" stroke-width="1.400"/>
<path d="M198.300 112.800h10M198.300 116.500h7.200M198.300 120.200h10M195.500 112.800h1.300M195.500 116.500h1.300M195.500 120.200h1.300" stroke="#8c8c8c" stroke-width="1.300"/>
<rect x="192.800" y="140.900" width="18.500" height="16.400" stroke="#c8c8c8" stroke-width="1.400"/>
<path d="M195.800 144.800h12.500M195.800 148.500h12.500M195.800 152.200h12.500" stroke="#8c8c8c" stroke-width="1.300"/>
</g>
<g id="ic-focus" stroke-linejoin="miter" stroke-linecap="butt">
<rect x="304.200" y="108.200" width="35.800" height="35.600" fill="#d2d2d2" stroke="none"/>
<path d="M313 113.800h10.500l7.100 7v17.500h-17.600z" fill="#292929" stroke="none"/>
<path d="M323.600 113.800v7h7" stroke="#d2d2d2" stroke-width="1.200"/>
<path d="M306.400 114.600v-4.400h4.400M333.400 110.200h4.400v4.400M306.400 137.400v4.400h4.400M333.400 141.800h4.400v-4.400" stroke="#292929" stroke-width="1.300"/>
</g>
<g id="ic-immersive" stroke-linejoin="round" stroke-linecap="butt">
<path d="M385.300 131.500v-17c-.6-2.600-2.600-4-5.500-4h-11.800v28h11.800c2.600 0 4.500 .9 5.500 2.600M385.300 114.500c.6-2.600 2.600-4 5.500-4h12.600v16.200" stroke="#c8c8c8" stroke-width="1.500" stroke-linejoin="miter"/>
<g stroke="#3a96dd" stroke-width="1.500">
<path d="M396.600 127.700v17.600l-6.400-5.400h-3.500v-6.800h3.500z"/>
<path d="M400 132.500a5.600 5.600 0 0 1 0 8M402.600 129.200a10 10 0 0 1 0 14.600" stroke-linecap="round"/>
</g>
</g>
<g id="ic-sun" stroke="#d2d2d2" stroke-width="1.300" stroke-linecap="round">
<circle cx="470.100" cy="125.800" r="8.500"/>
<path d="M474.400 115.400l2.300-5.500M480.500 121.500l5.500-2.300M480.500 130.100l5.500 2.300M474.400 136.200l2.300 5.500M465.800 136.200l-2.300 5.500M459.700 130.100l-5.500 2.300M459.700 121.500l-5.500-2.300M465.800 115.400l-2.300-5.500"/>
</g>
<g id="ic-vertical" stroke-linejoin="miter" stroke-linecap="butt">
<path d="M528.400 107.400v37.400M524.300 111.400l4.100-4.200 4.100 4.200M524.300 140.800l4.100 4.200 4.100-4.200" stroke="#3a96dd" stroke-width="1.400" stroke-linecap="round" stroke-linejoin="round"/>
<rect x="536" y="110.700" width="24.700" height="30.700" stroke="#c8c8c8" stroke-width="1.600"/>
<path d="M540.300 118h16.400M540.300 123h16.400M540.300 128h16.400M540.300 133h16.400" stroke="#9a9a9a" stroke-width="1.400"/>
</g>
<g id="ic-side" stroke-linejoin="miter" stroke-linecap="butt">
<rect x="582" y="113" width="34" height="20.700" stroke="#c8c8c8" stroke-width="1.500"/>
<path d="M599 113v20.700" stroke="#c8c8c8" stroke-width="2.600"/>
<path d="M585.300 118h10M585.300 123h10M585.300 128h10M602.800 118h10M602.800 123h10M602.800 128h10" stroke="#8c8c8c" stroke-width="1.400"/>
<path d="M580.400 141.500h37.200M584.400 137.400l-4.200 4.100 4.200 4.100M613.600 137.400l4.200 4.100-4.200 4.100" stroke="#3a96dd" stroke-width="1.400" stroke-linecap="round" stroke-linejoin="round"/>
</g>
<path d="M652 117.600l3.600 2.700 6-5.900" stroke="#fff" stroke-width="1.600"/>
<g id="ic-zoom" stroke="#c8c8c8" stroke-width="1.300">
<circle cx="829.600" cy="121.700" r="12.800"/><path d="M838.800 130.800l13.800 13.700"/>
</g>
<g id="ic-100" stroke-linejoin="miter" stroke-linecap="butt">
<path d="M884 143h-9.200v-33.600h14.800l10.400 10.100v9.300" stroke="#c8c8c8" stroke-width="1.600"/>
<path d="M889.600 109.400v10.100h10.400" stroke="#c8c8c8" stroke-width="1.300"/>
<rect x="884" y="129" width="24" height="16.700" fill="#3a96dd" stroke="none"/>
</g>
<g id="ic-zoomsmall" stroke-linejoin="miter" stroke-linecap="butt">
<rect x="924" y="108" width="14" height="17.800" stroke="#c8c8c8" stroke-width="1.500"/>
<path d="M927.200 111.500h7.600M927.200 115.400h7.600M927.200 119.300h7.600M927.200 123.200h7.600" stroke="#8c8c8c" stroke-width="1.300" stroke-dasharray="none"/>
<rect x="921.900" y="143.500" width="18.200" height="10.800" stroke="#c8c8c8" stroke-width="1.400"/>
<path d="M931 143.500v10.800" stroke="#c8c8c8" stroke-width="2.200"/>
<path d="M924 146.600h4.600M924 150.600h4.600M933.400 146.600h4.600M933.400 150.600h4.600" stroke="#8c8c8c" stroke-width="1.300"/>
<path d="M924.200 180.700v-8.500h13.800v8.500" stroke="#c8c8c8" stroke-width="1.500"/>
<path d="M921.800 186.400h7.600M932.600 186.400h7.600M925 183l-3.400 3.400 3.400 3.400M937 183l3.400 3.400-3.400 3.400" stroke="#3a96dd" stroke-width="1.300" stroke-linecap="round" stroke-linejoin="round"/>
</g>
<g id="ic-newwin" stroke-linejoin="miter" stroke-linecap="butt">
<path d="M1105 113h16v26h-34.200v-20.800" stroke="#c8c8c8" stroke-width="1.500"/>
<rect x="1105" y="113.700" width="15.300" height="3.600" fill="#606060" stroke="none"/>
<path d="M1105 118h16" stroke="#c8c8c8" stroke-width="1.400"/>
<path d="M1093.400 106.200v18.600M1084 115.400h19" stroke="#6bd67c" stroke-width="1.500" stroke-linecap="round"/>
</g>
<g id="ic-arrange" stroke-linejoin="miter" stroke-linecap="butt">
<rect x="1148.800" y="109.600" width="32.400" height="4.600" fill="#606060" stroke="none"/>
<rect x="1148.800" y="126" width="32.400" height="4" fill="#606060" stroke="none"/>
<rect x="1148" y="109" width="34" height="33.800" stroke="#c8c8c8" stroke-width="1.500"/>
<path d="M1148 114.500h34M1148 125.300h34M1148 130.300h34" stroke="#c8c8c8" stroke-width="1.300"/>
</g>
<g id="ic-split" stroke-linejoin="miter" stroke-linecap="butt">
<rect x="1205.800" y="113.600" width="32.400" height="4" fill="#606060" stroke="none"/>
<rect x="1205.100" y="113" width="34" height="26.100" stroke="#c8c8c8" stroke-width="1.500"/>
<path d="M1205.100 118h34" stroke="#c8c8c8" stroke-width="1.300"/>
<path d="M1205.100 127.900h34" stroke="#8c8c8c" stroke-width="1.300"/>
</g>
<g id="ic-dis" stroke="#9c9c9c" stroke-width="1.400" stroke-linejoin="miter" stroke-linecap="butt">
<path d="M1268.800 111.100h5.400l3.600 3.400v8.200h-9zM1274 111.100v3.600h3.800M1279 111.100h5.400l3.600 3.400v8.200h-9zM1284.200 111.100v3.600h3.800"/>
<path d="M1271.800 142.400h-3v11h3M1272.300 142.400h5.400l3.600 3.400v7.600h-9zM1277.500 142.400v3.600h3.800"/>
<path d="M1285 140v18M1282 143l3-3.200 3 3.200M1282 155l3 3.200 3-3.200" stroke-linecap="round" stroke-linejoin="round"/>
<path d="M1268.800 179h5.400l3.600 3.400v8h-9zM1274 179v3.600h3.800M1279 179h5.400l3.600 3.400v8h-9zM1284.200 179v3.600h3.800"/>
<path d="M1269 174.400h4c2.600 0 4.300 1.200 4.800 3.200M1271.600 171.600l-2.800 2.800 2.800 2.800" stroke-linecap="round" stroke-linejoin="round" stroke-width="1.300"/>
</g>
<g id="ic-switchwin" stroke-linejoin="miter" stroke-linecap="butt">
<path d="M1493 122.300v-13.300h26.400v11.300" stroke="#c8c8c8" stroke-width="1.500"/>
<rect x="1493.700" y="109.700" width="25" height="3" fill="#606060" stroke="none"/>
<path d="M1493 113.300h26.400" stroke="#c8c8c8" stroke-width="1.300"/>
<rect x="1500.800" y="121.700" width="26" height="21.300" stroke="#c8c8c8" stroke-width="1.500"/>
<rect x="1501.500" y="122.400" width="24.600" height="2.800" fill="#606060" stroke="none"/>
<path d="M1500.800 125.800h26" stroke="#c8c8c8" stroke-width="1.300"/>
<path d="M1495.400 124.600c-4.600 3-6 8-3.400 11.600c2.200 3 6.500 3.600 13 3.200M1499.400 133l6.400 6.300-6.400 6" stroke="#3a96dd" stroke-width="1.500" stroke-linecap="round" stroke-linejoin="round"/>
</g>
<path d="M1538.600 176.200l3 3.100 3-3.100M1592.300 177.900l3 3.100 3-3.100" stroke="#f2f2f2" stroke-width="1.300"/>
<g id="ic-macros" stroke-linejoin="miter" stroke-linecap="butt">
<path d="M1596 141.400h-17v-31h34.200v16" stroke="#c8c8c8" stroke-width="1.500"/>
<path d="M1579 115h34.200" stroke="#c8c8c8" stroke-width="1.300"/>
<path d="M1583.600 120.300h2.200M1589.800 120.300h6.200M1598.600 120.300h10.400M1583.600 125.200h2.200M1589.800 125.200h9M1583.600 130.400h2.200M1589.800 130.400h5M1583.600 135.200h2.200M1589.800 135.200h5" stroke="#8c8c8c" stroke-width="1.300"/>
<path d="M1611 132.400v-3.200a2.400 2.400 0 0 1 4.800 0v3.200h-4.800M1613.400 126.800h-12.400a2 2 0 0 0-2 2v12.400M1611 132.400v10a2.400 2.400 0 0 1-2.400 2.400h-10a2.400 2.400 0 0 1 0-4.800h7.600v2.400" stroke="#e2504e" stroke-width="1.400" stroke-linejoin="round"/>
</g>
<g id="ic-props" stroke-linejoin="miter" stroke-linecap="butt">
<path d="M1681 142.800h-15v-33.600h25v19" stroke="#c8c8c8" stroke-width="1.500"/>
<rect x="1670.600" y="115.400" width="4" height="4" stroke="#8c8c8c" stroke-width="1.300"/>
<rect x="1670.600" y="123.700" width="4" height="4" stroke="#8c8c8c" stroke-width="1.300"/>
<rect x="1670.600" y="132.600" width="4" height="4" stroke="#8c8c8c" stroke-width="1.300"/>
<path d="M1678 117.200h8.600M1678 125.500h8.600M1678 134.400h3" stroke="#8c8c8c" stroke-width="1.300"/>
<rect x="1681.200" y="128.400" width="18" height="17.600" rx="1.600" fill="#038387" stroke="none"/>
</g>
<path d="M1886.300 201.400l5.700 5.600 5.700-5.600" stroke="#f2f2f2" stroke-width="1.400"/>
<!-- END RIBBON -->
<!-- RULERS -->
<g id="hruler" fill="#e8e8e8" stroke="none">
<rect x="321.0" y="232.0" width="1" height="6"/>
<rect x="336.0" y="234.0" width="1" height="2"/>
<rect x="352.0" y="232.0" width="1" height="6"/>
<rect x="367.0" y="234.0" width="1" height="2"/>
<rect x="382.0" y="232.0" width="1" height="6"/>
<rect x="398.0" y="234.0" width="1" height="2"/>
<rect x="413.0" y="232.0" width="1" height="6"/>
<rect x="428.0" y="234.0" width="1" height="2"/>
<rect x="444.0" y="232.0" width="1" height="6"/>
<rect x="459.0" y="234.0" width="1" height="2"/>
<rect x="490.0" y="234.0" width="1" height="2"/>
<rect x="505.0" y="232.0" width="1" height="6"/>
<rect x="521.0" y="234.0" width="1" height="2"/>
<rect x="551.0" y="234.0" width="1" height="2"/>
<rect x="567.0" y="232.0" width="1" height="6"/>
<rect x="582.0" y="234.0" width="1" height="2"/>
<rect x="613.0" y="234.0" width="1" height="2"/>
<rect x="628.0" y="232.0" width="1" height="6"/>
<rect x="643.0" y="234.0" width="1" height="2"/>
<rect x="674.0" y="234.0" width="1" height="2"/>
<rect x="689.0" y="232.0" width="1" height="6"/>
<rect x="705.0" y="234.0" width="1" height="2"/>
<rect x="735.0" y="234.0" width="1" height="2"/>
<rect x="751.0" y="232.0" width="1" height="6"/>
<rect x="766.0" y="234.0" width="1" height="2"/>
<rect x="797.0" y="234.0" width="1" height="2"/>
<rect x="812.0" y="232.0" width="1" height="6"/>
<rect x="827.0" y="234.0" width="1" height="2"/>
<rect x="858.0" y="234.0" width="1" height="2"/>
<rect x="873.0" y="232.0" width="1" height="6"/>
<rect x="889.0" y="234.0" width="1" height="2"/>
<rect x="919.0" y="234.0" width="1" height="2"/>
<rect x="935.0" y="232.0" width="1" height="6"/>
<rect x="950.0" y="234.0" width="1" height="2"/>
<rect x="981.0" y="234.0" width="1" height="2"/>
<rect x="996.0" y="232.0" width="1" height="6"/>
<rect x="1011.0" y="234.0" width="1" height="2"/>
<rect x="1042.0" y="234.0" width="1" height="2"/>
<rect x="1057.0" y="232.0" width="1" height="6"/>
<rect x="1073.0" y="234.0" width="1" height="2"/>
<rect x="1103.0" y="234.0" width="1" height="2"/>
<rect x="1119.0" y="232.0" width="1" height="6"/>
<rect x="1134.0" y="234.0" width="1" height="2"/>
<rect x="1165.0" y="234.0" width="1" height="2"/>
<rect x="1180.0" y="232.0" width="1" height="6"/>
<rect x="1195.0" y="234.0" width="1" height="2"/>
<rect x="1226.0" y="234.0" width="1" height="2"/>
<rect x="1242.0" y="232.0" width="1" height="6"/>
<rect x="1257.0" y="234.0" width="1" height="2"/>
<rect x="1288.0" y="234.0" width="1" height="2"/>
<rect x="1303.0" y="232.0" width="1" height="6"/>
<rect x="1318.0" y="234.0" width="1" height="2"/>
<rect x="1349.0" y="234.0" width="1" height="2"/>
<rect x="1364.0" y="232.0" width="1" height="6"/>
<rect x="1380.0" y="234.0" width="1" height="2"/>
<rect x="1410.0" y="234.0" width="1" height="2"/>
<rect x="1426.0" y="232.0" width="1" height="6"/>
<rect x="1441.0" y="234.0" width="1" height="2"/>
<rect x="1456.0" y="232.0" width="1" height="6"/>
<rect x="1472.0" y="234.0" width="1" height="2"/>
<rect x="1487.0" y="232.0" width="1" height="6"/>
<rect x="1502.0" y="234.0" width="1" height="2"/>
<rect x="1518.0" y="232.0" width="1" height="6"/>
<rect x="1533.0" y="234.0" width="1" height="2"/>
<rect x="1548.0" y="232.0" width="1" height="6"/>
<rect x="1564.0" y="234.0" width="1" height="2"/>
<rect x="1579.0" y="232.0" width="1" height="6"/>
<rect x="1594.0" y="234.0" width="1" height="2"/>
</g>
<g id="markers" fill="#b9b9b9" stroke="none">
<path d="M469 223.300h13.600v3l-6.800 7.300l-6.800-7.300z"/>
<path d="M475.800 233.700l6.800 6.700v3.200h-13.600v-3.200z"/>
<rect x="469" y="244.600" width="13.600" height="5.600"/>
<path d="M1453 233.800l6.800 6.800v4h-13.600v-4z"/>
</g>
<path d="M11.700 233v6.500h6.500" stroke="#f5f5f5" stroke-width="3" stroke-linecap="butt" stroke-linejoin="miter" fill="none"/>
<g id="vruler" fill="#e8e8e8" stroke="none">
<rect x="12.0" y="312.0" width="6" height="1"/>
<rect x="14.0" y="327.0" width="2" height="1"/>
<rect x="12.0" y="342.0" width="6" height="1"/>
<rect x="14.0" y="357.0" width="2" height="1"/>
<rect x="12.0" y="373.0" width="6" height="1"/>
<rect x="14.0" y="388.0" width="2" height="1"/>
<rect x="12.0" y="404.0" width="6" height="1"/>
<rect x="14.0" y="419.0" width="2" height="1"/>
<rect x="14.0" y="449.0" width="2" height="1"/>
<rect x="12.0" y="465.0" width="6" height="1"/>
<rect x="14.0" y="480.0" width="2" height="1"/>
<rect x="14.0" y="511.0" width="2" height="1"/>
<rect x="12.0" y="527.0" width="6" height="1"/>
<rect x="14.0" y="541.0" width="2" height="1"/>
<rect x="14.0" y="572.0" width="2" height="1"/>
<rect x="12.0" y="588.0" width="6" height="1"/>
<rect x="14.0" y="603.0" width="2" height="1"/>
<rect x="14.0" y="633.0" width="2" height="1"/>
<rect x="12.0" y="649.0" width="6" height="1"/>
<rect x="14.0" y="664.0" width="2" height="1"/>
<rect x="14.0" y="695.0" width="2" height="1"/>
<rect x="12.0" y="711.0" width="6" height="1"/>
<rect x="14.0" y="725.0" width="2" height="1"/>
<rect x="14.0" y="756.0" width="2" height="1"/>
<rect x="12.0" y="772.0" width="6" height="1"/>
<rect x="14.0" y="787.0" width="2" height="1"/>
<rect x="14.0" y="818.0" width="2" height="1"/>
<rect x="12.0" y="833.0" width="6" height="1"/>
<rect x="14.0" y="848.0" width="2" height="1"/>
<rect x="14.0" y="879.0" width="2" height="1"/>
<rect x="12.0" y="895.0" width="6" height="1"/>
<rect x="14.0" y="910.0" width="2" height="1"/>
<rect x="14.0" y="940.0" width="2" height="1"/>
<rect x="12.0" y="956.0" width="6" height="1"/>
<rect x="14.0" y="971.0" width="2" height="1"/>
</g>
<!-- STATUS ICONS -->
<g id="st-spell" stroke="#f4f4f4" stroke-width="1.500" stroke-linejoin="miter" stroke-linecap="butt">
<path d="M199.800 1001.600c-.6-1-1.600-1.600-3-1.600h-4.900v13.800h7.900v-12.200c.6-1 1.600-1.600 3-1.600h4.600v6.400"/>
<path d="M200.800 1008.200l7.400 7.400M208.200 1008.200l-7.400 7.400" stroke-linecap="round"/>
</g>
<g id="st-macro" stroke="#f4f4f4" stroke-width="1.500" stroke-linejoin="miter" stroke-linecap="butt">
<path d="M530 1013.800h-5.300v-14h16.500v5"/>
<path d="M524.700 1003.200h16.500M527 1006.200h4M527 1009.600h3"/>
<circle cx="536" cy="1010.300" r="4.800" fill="#141414"/>
<circle cx="536" cy="1010.300" r="2.300" fill="#e6e6e6" stroke="none"/>
</g>
<g id="st-access" stroke="#f4f4f4" stroke-width="1.500" stroke-linejoin="round" stroke-linecap="round">
<circle cx="571.600" cy="1000.800" r="1.900"/>
<path d="M565 1002.200c2.200 .2 4 1.800 6.600 1.800s4.400-1.600 6.600-1.800c1.400 0 1.400 1.800 .2 2.200l-4.600 1.600c0 2 .2 3.400 .8 4.800M569.400 1006c0 3.400-.6 6-1.800 8.400c-.6 1.200-2.400 .6-2-.8c.8-2.200 1.200-4.600 1.200-7.600l-2.200-1.600c-1.200-.6-.8-2.200 .4-2.200"/>
<path d="M572.500 1011.600l3 3 7-6.600"/>
</g>
<g id="st-focus" stroke="#f4f4f4" stroke-width="1.600" stroke-linejoin="miter" stroke-linecap="butt">
<path d="M1479.700 1002.300v-3.500h3.500M1492.800 998.800h3.500v3.500M1479.700 1011.500v3.500h3.500M1492.800 1015h3.500v-3.500"/>
<path d="M1483.300 1000.800h5.600l3.800 3.600v8.400h-9.400zM1488.700 1000.800v3.800h4" stroke-width="1.300"/>
</g>
<g id="st-read" stroke="#f4f4f4" stroke-width="1.500" stroke-linejoin="miter" stroke-linecap="butt">
<path d="M1572.400 1000c-1-.8-2.200-1.200-3.600-1.200h-4.200v13.800h4.200c1.400 0 2.600 .4 3.600 1.400c1-1 2.200-1.400 3.600-1.400h4.200v-13.800h-4.200c-1.400 0-2.600 .4-3.600 1.200zM1572.400 1000v14"/>
<path d="M1566.400 1002h4.200M1566.400 1005h4.200M1566.400 1008h4.200M1566.400 1011h4.200M1574.200 1002h4.200M1574.200 1005h4.200M1574.200 1008h4.200M1574.200 1011h4.200" stroke="#c0c0c0" stroke-width="1.600"/>
</g>
<g id="st-print" stroke="#f4f4f4" stroke-width="1.600" stroke-linejoin="miter" stroke-linecap="butt">
<rect x="1615.700" y="998.800" width="13.500" height="16.200"/>
<path d="M1618 1002h9M1618 1005h9M1618 1008h9M1618 1011h9" stroke="#c8c8c8" stroke-width="1.800"/>
</g>
<g id="st-web" stroke="#f4f4f4" stroke-width="1.500" stroke-linejoin="miter" stroke-linecap="butt">
<path d="M1670 1014.400h-5.300v-15.600h15.600v5"/>
<path d="M1667 1002h11M1667 1005h5M1667 1008h3.500M1667 1011h3" stroke="#c8c8c8" stroke-width="1.500"/>
<circle cx="1676" cy="1009.800" r="5.100" fill="#141414" stroke-width="1.400"/>
<path d="M1676 1004.700v10.200M1671 1009.800h10M1676 1004.700c-3 3-3 7.200 0 10.200M1676 1004.700c3 3 3 7.200 0 10.200" stroke-width="1.100"/>
</g>
<g id="st-zoom" stroke="#e6e6e6" stroke-width="1.200" stroke-linecap="butt">
<path d="M1705 1006.300h10M1852 1006.800h9.600M1856.800 1002v9.600"/>
<path d="M1721 1007.400h125" stroke="#b4b4b4" stroke-width="1"/>
<path d="M1783.200 1003.800v7.200" stroke="#b4b4b4" stroke-width="1"/>
<rect x="1785" y="1000.200" width="5.800" height="13.800" fill="#b9b9b9" stroke="none"/>
</g>
<rect x="1305" y="1024.500" width="47" height="6" rx="3" fill="#242424" stroke="#383838" stroke-width="1"/>
<!-- END EXTRA -->
</svg>

</div>
</body>
</html>
